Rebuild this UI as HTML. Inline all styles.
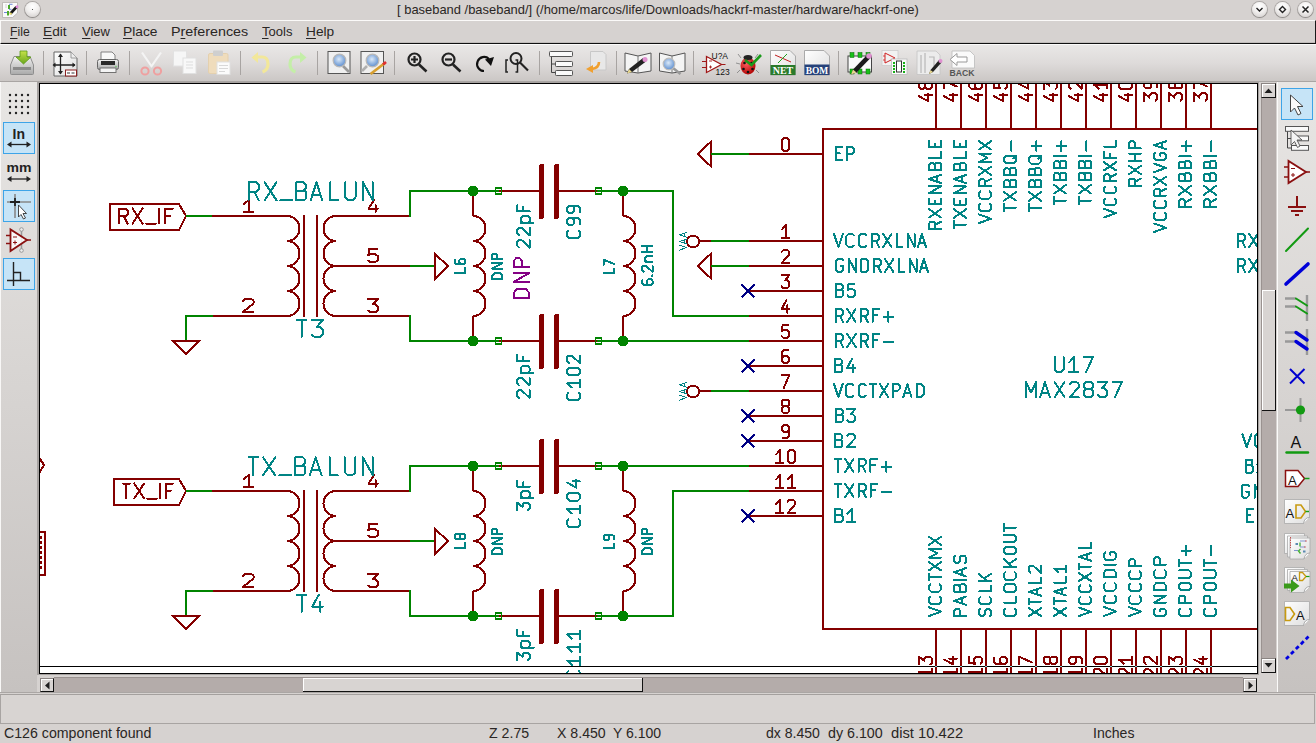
<!DOCTYPE html>
<html><head><meta charset="utf-8">
<style>
*{margin:0;padding:0;box-sizing:border-box}
html,body{width:1316px;height:743px;overflow:hidden;background:#d6d2d0;font-family:"Liberation Sans",sans-serif;}
.abs{position:absolute}
#title{left:0;top:0;width:1316px;height:20px;background:#d6d2d0}
.ct{position:absolute;white-space:pre;transform-origin:0 0;color:#2a2624}
.tx{position:absolute;left:397px;top:2px;font-size:12.6px;color:#2a2624;white-space:nowrap;letter-spacing:0.02px}
.wbtn{position:absolute;top:2px;width:15px;height:15px;border-radius:50%;background:radial-gradient(circle at 50% 30%,#ffffff 0%,#f2f0ef 45%,#cdc9c7 100%);box-shadow:0 0 0 1px rgba(120,116,114,0.45),0 1px 1px rgba(0,0,0,0.25)}
#menu{left:0;top:20px;width:1316px;height:24px;background:#d6d2d0;border-top:1px solid #fbfaf9;border-left:1px solid #fbfaf9;border-right:1px solid #1a1a1a;border-bottom:1px solid #101010;box-shadow:inset 0 -1px 0 #c0bcba}
#menu span{position:absolute;top:5px;font-size:12.7px;color:#231f1e;white-space:nowrap}
#menu span u{text-decoration:none;border-bottom:1px solid #231f1e;line-height:11px;display:inline-block}
#tool{left:0;top:44px;width:1316px;height:38px;background:linear-gradient(#e9e7e6,#dedbda 50%,#cbc7c5);border-top:1px solid #fbfaf9;border-bottom:1px solid #a9a5a3}
.sep{position:absolute;top:7px;width:1px;height:24px;background:#a9a5a3;box-shadow:1px 0 0 #f2f0ef}
#lpanel{left:0;top:82px;width:37px;height:610px;background:linear-gradient(#e8e6e4,#c6c2c0);border-left:1px solid #f8f7f6}
#rpanel{left:1277px;top:82px;width:39px;height:610px;background:linear-gradient(#e8e6e4,#c6c2c0);border-left:1px solid #fbfaf9}
.selb{position:absolute;width:32px;height:32px;background:#c6e4f7;border:1px solid #3da4e8}
#canvasframe{left:37px;top:82px;width:1222px;height:593px;background:#a6a2a0}
#canvas{left:39px;top:83px;width:1219px;height:591px;background:#000}
#canvasin{left:40px;top:84px;width:1217px;height:589px;background:#fff;overflow:hidden}
#vscroll{left:1259px;top:82px;width:18px;height:593px;background:#d6d2d0}
#vtrack{left:1261px;top:98px;width:15px;height:561px;background:#b4acaa;border-left:1px solid #9a9290}
#vthumb{left:1262px;top:290px;width:14px;height:121px;background:#d8d4d2;border-right:1px solid #111;border-bottom:1px solid #111;box-shadow:inset 1px 1px 0 #fff}
.sbtn{position:absolute;width:15px;height:15px;background:#d8d4d2;border:1px solid #111;border-top-color:#8a8482;border-left-color:#8a8482;box-shadow:inset 1px 1px 0 #fff}
#hscroll{left:37px;top:675px;width:1222px;height:18px;background:#d6d2d0}
#htrack{left:54px;top:677px;width:1189px;height:15px;background:#b4acaa;border-top:1px solid #9a9290}
#hthumb{left:303px;top:678px;width:340px;height:14px;background:#d8d4d2;border-right:1px solid #111;border-bottom:1px solid #111;box-shadow:inset 1px 1px 0 #fff}
#status{left:0;top:693px;width:1316px;height:50px;background:#d6d2d0}
#statbox{left:0;top:694px;width:1315px;height:30px;border:1px solid #a8a4a2;border-top-color:#a4a09e;background:#d8d4d2}
#status span{position:absolute;top:32px;font-size:13px;color:#2a2624;white-space:nowrap}
</style></head>
<body>
<div id="title" class="abs">
  <svg class="abs" style="left:0;top:0" width="20" height="20" viewBox="0 0 20 20">
    <path d="M2.5,2.5 H17.5 V13 L12.5,17.5 H2.5 Z" fill="#fafafa" stroke="#b4b0ac" stroke-width="0.8"/>
    <path d="M5.5,5 h1 M5.5,7 h1" stroke="#999" stroke-width="0.8"/>
    <rect x="8" y="5" width="2" height="4" fill="#4caa2a"/>
    <rect x="7" y="11" width="2" height="4.5" fill="#4caa2a"/>
    <path d="M9,4.3 h3.5 M9,9.3 h2.5 M4,12.5 h3" stroke="#4a6ad0" stroke-width="0.8"/>
    <path d="M10.5,13.5 L16.5,7" stroke="#151515" stroke-width="2.6"/>
    <circle cx="10.6" cy="13.6" r="1.2" fill="#e8dc70"/>
    <circle cx="17" cy="6.8" r="1.5" fill="#e088d8"/>
  </svg>
  <div class="wbtn" style="left:25px"><div style="position:absolute;left:7px;top:7px;width:1px;height:1px;background:#555"></div></div>
  <div class="wbtn" style="left:1252px"><svg width="15" height="15"><path d="M4.5 6 L7.5 9 L10.5 6" stroke="#222" stroke-width="1.4" fill="none"/></svg></div>
  <div class="wbtn" style="left:1275px"><svg width="15" height="15"><path d="M7.5 4.5 L10.5 7.5 L7.5 10.5 L4.5 7.5 Z" stroke="#222" stroke-width="1.4" fill="none"/></svg></div>
  <div class="wbtn" style="left:1298px"><svg width="15" height="15"><path d="M4.5 4.5 L10.5 10.5 M10.5 4.5 L4.5 10.5" stroke="#222" stroke-width="1.5" fill="none"/></svg></div>
</div>
<div id="menu" class="abs"></div>
<div id="tool" class="abs">

</div>
<div id="lpanel" class="abs">

</div>
<div id="canvasframe" class="abs"></div>
<div id="canvas" class="abs"></div>
<div id="canvasin" class="abs">
<svg width="1217" height="589" viewBox="40 84 1217 589" shape-rendering="crispEdges" style="position:absolute;left:0;top:0">
<polygon points="110,204 179,204 186,216 179,230 110,230" stroke="#840000" stroke-width="2" fill="none" stroke-linecap="square"/>
<path d="M119,223.5 L119,208.5 L125.39,208.5 L127.57,210.6 L127.57,214.2 L125.39,216.3 L119,216.3M123.83,216.3 L127.57,223.5M132.56,208.5 L142.62,223.5M142.62,208.5 L132.56,223.5M145.89,223.5 L155.93,223.5M159.31,208.5 L159.31,223.5M172.6,208.5 L165.11,208.5 L165.11,223.5M165.11,215.7 L170.42,215.7" stroke="#840000" stroke-width="2" fill="none" stroke-linecap="round" stroke-linejoin="round"/>
<line x1="186" y1="216" x2="212" y2="216" stroke="#008400" stroke-width="2" stroke-linecap="butt"/>
<line x1="212" y1="216" x2="287" y2="216" stroke="#840000" stroke-width="2" stroke-linecap="butt"/>
<path d="M287,216 A12.5,12.5 0 0 1 287,241 A12.5,12.5 0 0 1 287,266 A12.5,12.5 0 0 1 287,291 A12.5,12.5 0 0 1 287,316" stroke="#840000" stroke-width="2" fill="none"/>
<line x1="212" y1="316" x2="287" y2="316" stroke="#840000" stroke-width="2" stroke-linecap="butt"/>
<polyline points="212,316 186,316 186,341" stroke="#008400" stroke-width="2" fill="none" stroke-linecap="square"/>
<polygon points="173,341 199,341 186,354" stroke="#840000" stroke-width="2" fill="none" stroke-linecap="square"/>
<line x1="304" y1="215" x2="304" y2="317" stroke="#840000" stroke-width="2" stroke-linecap="butt"/>
<line x1="317" y1="215" x2="317" y2="317" stroke="#840000" stroke-width="2" stroke-linecap="butt"/>
<path d="M336,216 A12.5,12.5 0 0 0 336,241 A12.5,12.5 0 0 0 336,266 A12.5,12.5 0 0 0 336,291 A12.5,12.5 0 0 0 336,316" stroke="#840000" stroke-width="2" fill="none"/>
<line x1="336" y1="216" x2="410" y2="216" stroke="#840000" stroke-width="2" stroke-linecap="butt"/>
<line x1="336" y1="266" x2="410" y2="266" stroke="#840000" stroke-width="2" stroke-linecap="butt"/>
<line x1="336" y1="316" x2="410" y2="316" stroke="#840000" stroke-width="2" stroke-linecap="butt"/>
<polyline points="410,216 410,191 473,191" stroke="#008400" stroke-width="2" fill="none" stroke-linecap="square"/>
<polyline points="410,316 410,341 473,341" stroke="#008400" stroke-width="2" fill="none" stroke-linecap="square"/>
<line x1="410" y1="266" x2="435" y2="266" stroke="#008400" stroke-width="2" stroke-linecap="butt"/>
<polygon points="435,254 435,279 448,266" stroke="#840000" stroke-width="2" fill="none" stroke-linecap="square"/>
<path d="M243.5,204.27 L248.84,200 L248.84,212.2M243.5,212.2 L252.8,212.2" stroke="#840000" stroke-width="2" fill="none" stroke-linecap="round" stroke-linejoin="round"/>
<path d="M374.27,200 L368.5,208.54 L377.8,208.54M375.56,205.12 L375.56,212.2" stroke="#840000" stroke-width="2" fill="none" stroke-linecap="round" stroke-linejoin="round"/>
<path d="M377.29,249 L369.07,249 L368.36,254.98 L370.14,254.46 L375.5,254.46 L378,256.28 L378,260.18 L375.5,262 L370.14,262 L368,260.44" stroke="#840000" stroke-width="2" fill="none" stroke-linecap="round" stroke-linejoin="round"/>
<path d="M243,300.69 L245.39,299 L251.11,299 L253.5,300.69 L253.5,303.42 L243,312 L253.5,312" stroke="#840000" stroke-width="2" fill="none" stroke-linecap="round" stroke-linejoin="round"/>
<path d="M368,299 L378,299 L372.56,304.46 L375.37,304.46 L378,306.41 L378,310.18 L375.54,312 L370.1,312 L368,310.44" stroke="#840000" stroke-width="2" fill="none" stroke-linecap="round" stroke-linejoin="round"/>
<path d="M248.5,200.3 L248.5,182.3 L256.07,182.3 L258.66,184.82 L258.66,189.14 L256.07,191.66 L248.5,191.66M254.23,191.66 L258.66,200.3M264.57,182.3 L276.5,200.3M276.5,182.3 L264.57,200.3M280.37,200.3 L292.28,200.3M296.41,190.58 L304.22,190.58 L306.27,192.56 L306.27,198.14 L304.22,200.3 L296.41,200.3 L296.41,182.3 L303.66,182.3 L305.52,184.1 L305.52,188.78 L303.66,190.58M310.68,200.3 L316.48,182.3 L322.31,200.3M312.59,194.9 L320.39,194.9M330.19,182.3 L330.19,200.3 L338.14,200.3M345.26,182.3 L345.26,197.42 L348.24,200.3 L352.52,200.3 L355.5,197.42 L355.5,182.3M363.03,200.3 L363.03,182.3 L372.8,200.3 L372.8,182.3" stroke="#008484" stroke-width="2" fill="none" stroke-linecap="round" stroke-linejoin="round"/>
<path d="M297,320 L306.45,320M301.72,320 L301.72,336.7M311.83,320 L322.8,320 L316.83,327.01 L319.92,327.01 L322.8,329.52 L322.8,334.36 L320.1,336.7 L314.13,336.7 L311.83,334.7" stroke="#008484" stroke-width="2" fill="none" stroke-linecap="round" stroke-linejoin="round"/>
<line x1="473" y1="191" x2="473" y2="216" stroke="#840000" stroke-width="2" stroke-linecap="butt"/>
<path d="M473,216 A12.5,12.5 0 0 1 473,241 A12.5,12.5 0 0 1 473,266 A12.5,12.5 0 0 1 473,291 A12.5,12.5 0 0 1 473,316" stroke="#840000" stroke-width="2" fill="none"/>
<line x1="473" y1="316" x2="473" y2="341" stroke="#840000" stroke-width="2" stroke-linecap="butt"/>
<line x1="623" y1="191" x2="623" y2="216" stroke="#840000" stroke-width="2" stroke-linecap="butt"/>
<path d="M623,216 A12.5,12.5 0 0 1 623,241 A12.5,12.5 0 0 1 623,266 A12.5,12.5 0 0 1 623,291 A12.5,12.5 0 0 1 623,316" stroke="#840000" stroke-width="2" fill="none"/>
<line x1="623" y1="316" x2="623" y2="341" stroke="#840000" stroke-width="2" stroke-linecap="butt"/>
<line x1="473" y1="191" x2="499" y2="191" stroke="#008400" stroke-width="2" stroke-linecap="butt"/>
<line x1="499" y1="191" x2="539" y2="191" stroke="#840000" stroke-width="2" stroke-linecap="butt"/>
<line x1="559" y1="191" x2="597" y2="191" stroke="#840000" stroke-width="2" stroke-linecap="butt"/>
<line x1="597" y1="191" x2="623" y2="191" stroke="#008400" stroke-width="2" stroke-linecap="butt"/>
<rect x="539" y="164" width="5" height="55" rx="2" fill="#840000"/>
<rect x="554" y="164" width="5" height="55" rx="2" fill="#840000"/>
<rect x="495.5" y="188" width="6" height="6" fill="none" stroke="#008400" stroke-width="1.2"/>
<rect x="595.5" y="188" width="6" height="6" fill="none" stroke="#008400" stroke-width="1.2"/>
<line x1="473" y1="341" x2="499" y2="341" stroke="#008400" stroke-width="2" stroke-linecap="butt"/>
<line x1="499" y1="341" x2="539" y2="341" stroke="#840000" stroke-width="2" stroke-linecap="butt"/>
<line x1="559" y1="341" x2="597" y2="341" stroke="#840000" stroke-width="2" stroke-linecap="butt"/>
<line x1="597" y1="341" x2="623" y2="341" stroke="#008400" stroke-width="2" stroke-linecap="butt"/>
<rect x="539" y="314" width="5" height="55" rx="2" fill="#840000"/>
<rect x="554" y="314" width="5" height="55" rx="2" fill="#840000"/>
<rect x="495.5" y="338" width="6" height="6" fill="none" stroke="#008400" stroke-width="1.2"/>
<rect x="595.5" y="338" width="6" height="6" fill="none" stroke="#008400" stroke-width="1.2"/>
<circle cx="473" cy="191" r="5.5" fill="#008400"/>
<circle cx="473" cy="341" r="5.5" fill="#008400"/>
<circle cx="623" cy="191" r="5.5" fill="#008400"/>
<circle cx="623" cy="341" r="5.5" fill="#008400"/>
<path d="M454.8,272.8 L465,272.8 L465,268.34M454.8,259.54 L454.8,262.68 L456.43,264.35 L463.47,264.35 L465,262.78 L465,260.07 L463.47,258.5 L460.92,258.5 L459.39,260.07 L459.39,262.78 L460.92,264.35" stroke="#008484" stroke-width="2" fill="none" stroke-linecap="round" stroke-linejoin="round"/>
<path d="M492.3,279 L502.1,279 L502.1,275.49 L499.94,273.16 L494.46,273.16 L492.3,275.49 L492.3,279M502.1,268.7 L492.3,268.7 L502.1,263.08 L492.3,263.08M502.1,259.26 L492.3,259.26 L492.3,254.99 L493.67,253.5 L496.02,253.5 L497.4,254.99 L497.4,259.26" stroke="#008484" stroke-width="2" fill="none" stroke-linecap="round" stroke-linejoin="round"/>
<path d="M603.5,272.8 L614,272.8 L614,268.86M603.5,265.33 L603.5,259.8 L614,263.86" stroke="#008484" stroke-width="2" fill="none" stroke-linecap="round" stroke-linejoin="round"/>
<path d="M642.3,280.2 L642.3,283.46 L643.93,285.2 L650.97,285.2 L652.5,283.57 L652.5,280.75 L650.97,279.12 L648.42,279.12 L646.89,280.75 L646.89,283.57 L648.42,285.2M652.09,275.81 L652.5,275.16M643.63,271.84 L642.3,270.43 L642.3,267.07 L643.63,265.65 L645.77,265.65 L652.5,271.84 L652.5,265.65M645.36,261.64 L652.5,261.64M646.58,261.64 L645.36,260.33 L645.36,257.29 L646.58,255.99 L652.5,255.99M642.3,251.97 L652.5,251.97M642.3,246 L652.5,246M647.2,251.97 L647.2,246" stroke="#008484" stroke-width="2" fill="none" stroke-linecap="round" stroke-linejoin="round"/>
<path d="M518.99,247.5 L517.4,245.8 L517.4,241.74 L518.99,240.04 L521.55,240.04 L529.6,247.5 L529.6,240.04M518.99,235.2 L517.4,233.49 L517.4,229.44 L518.99,227.74 L521.55,227.74 L529.6,235.2 L529.6,227.74M521.06,222.89 L533.63,222.89M522.52,222.89 L521.06,221.32 L521.06,217.66 L522.52,216.09 L528.14,216.09 L529.6,217.66 L529.6,221.32 L528.14,222.89M517.4,205 L517.4,211.24 L529.6,211.24M523.26,211.24 L523.26,206.82" stroke="#008484" stroke-width="2" fill="none" stroke-linecap="round" stroke-linejoin="round"/>
<path d="M514.1,297.9 L528.9,297.9 L528.9,292.44 L525.64,288.8 L517.36,288.8 L514.1,292.44 L514.1,297.9M528.9,281.86 L514.1,281.86 L528.9,273.11 L514.1,273.11M528.9,267.16 L514.1,267.16 L514.1,260.52 L516.17,258.2 L519.72,258.2 L521.8,260.52 L521.8,267.16" stroke="#840084" stroke-width="2" fill="none" stroke-linecap="round" stroke-linejoin="round"/>
<path d="M568.48,230.7 L567.2,232.03 L567.2,235.87 L569.25,238 L577.95,238 L580,235.87 L580,232.03 L578.72,230.7M580,223.94 L580,220.01 L577.95,217.91 L569.12,217.91 L567.2,219.87 L567.2,223.29 L569.12,225.26 L572.32,225.26 L574.24,223.29 L574.24,219.87 L572.32,217.91M580,211.74 L580,207.8 L577.95,205.7 L569.12,205.7 L567.2,207.67 L567.2,211.08 L569.12,213.05 L572.32,213.05 L574.24,211.08 L574.24,207.67 L572.32,205.7" stroke="#008484" stroke-width="2" fill="none" stroke-linecap="round" stroke-linejoin="round"/>
<path d="M518.89,397.8 L517.3,396.08 L517.3,391.97 L518.89,390.25 L521.45,390.25 L529.5,397.8 L529.5,390.25M518.89,385.35 L517.3,383.63 L517.3,379.52 L518.89,377.8 L521.45,377.8 L529.5,385.35 L529.5,377.8M520.96,372.9 L533.53,372.9M522.42,372.9 L520.96,371.31 L520.96,367.61 L522.42,366.02 L528.04,366.02 L529.5,367.61 L529.5,371.31 L528.04,372.9M517.3,354.8 L517.3,361.12 L529.5,361.12M523.16,361.12 L523.16,356.64" stroke="#008484" stroke-width="2" fill="none" stroke-linecap="round" stroke-linejoin="round"/>
<path d="M568.48,392.89 L567.2,394.24 L567.2,398.14 L569.25,400.3 L577.95,400.3 L580,398.14 L580,394.24 L578.72,392.89M571.68,387.36 L567.2,383.23 L580,383.23M580,387.36 L580,380.16M567.2,373.23 L567.2,370.03 L569.12,368.03 L578.08,368.03 L580,370.03 L580,373.23 L578.08,375.23 L569.12,375.23 L567.2,373.23M568.86,363.1 L567.2,361.36 L567.2,357.23 L568.86,355.5 L571.55,355.5 L580,363.1 L580,355.5" stroke="#008484" stroke-width="2" fill="none" stroke-linecap="round" stroke-linejoin="round"/>
<polyline points="623,191 673,191 673,316 749,316" stroke="#008400" stroke-width="2" fill="none" stroke-linecap="square"/>
<polyline points="623,341 749,341" stroke="#008400" stroke-width="2" fill="none" stroke-linecap="square"/>
<polygon points="114,479 179,479 186,491 179,505 114,505" stroke="#840000" stroke-width="2" fill="none" stroke-linecap="square"/>
<path d="M122.5,483.5 L130.21,483.5M126.36,483.5 L126.36,498.5M134.27,483.5 L144,498.5M144,483.5 L134.27,498.5M147.16,498.5 L156.88,498.5M160.14,483.5 L160.14,498.5M173,483.5 L165.76,483.5 L165.76,498.5M165.76,490.7 L170.89,490.7" stroke="#840000" stroke-width="2" fill="none" stroke-linecap="round" stroke-linejoin="round"/>
<line x1="186" y1="491" x2="212" y2="491" stroke="#008400" stroke-width="2" stroke-linecap="butt"/>
<line x1="212" y1="491" x2="287" y2="491" stroke="#840000" stroke-width="2" stroke-linecap="butt"/>
<path d="M287,491 A12.5,12.5 0 0 1 287,516 A12.5,12.5 0 0 1 287,541 A12.5,12.5 0 0 1 287,566 A12.5,12.5 0 0 1 287,591" stroke="#840000" stroke-width="2" fill="none"/>
<line x1="212" y1="591" x2="287" y2="591" stroke="#840000" stroke-width="2" stroke-linecap="butt"/>
<polyline points="212,591 186,591 186,616" stroke="#008400" stroke-width="2" fill="none" stroke-linecap="square"/>
<polygon points="173,616 199,616 186,629" stroke="#840000" stroke-width="2" fill="none" stroke-linecap="square"/>
<line x1="304" y1="490" x2="304" y2="592" stroke="#840000" stroke-width="2" stroke-linecap="butt"/>
<line x1="317" y1="490" x2="317" y2="592" stroke="#840000" stroke-width="2" stroke-linecap="butt"/>
<path d="M336,491 A12.5,12.5 0 0 0 336,516 A12.5,12.5 0 0 0 336,541 A12.5,12.5 0 0 0 336,566 A12.5,12.5 0 0 0 336,591" stroke="#840000" stroke-width="2" fill="none"/>
<line x1="336" y1="491" x2="410" y2="491" stroke="#840000" stroke-width="2" stroke-linecap="butt"/>
<line x1="336" y1="541" x2="410" y2="541" stroke="#840000" stroke-width="2" stroke-linecap="butt"/>
<line x1="336" y1="591" x2="410" y2="591" stroke="#840000" stroke-width="2" stroke-linecap="butt"/>
<polyline points="410,491 410,466 473,466" stroke="#008400" stroke-width="2" fill="none" stroke-linecap="square"/>
<polyline points="410,591 410,616 473,616" stroke="#008400" stroke-width="2" fill="none" stroke-linecap="square"/>
<line x1="410" y1="541" x2="435" y2="541" stroke="#008400" stroke-width="2" stroke-linecap="butt"/>
<polygon points="435,529 435,554 448,541" stroke="#840000" stroke-width="2" fill="none" stroke-linecap="square"/>
<path d="M243.5,479.27 L248.84,475 L248.84,487.2M243.5,487.2 L252.8,487.2" stroke="#840000" stroke-width="2" fill="none" stroke-linecap="round" stroke-linejoin="round"/>
<path d="M374.27,475 L368.5,483.54 L377.8,483.54M375.56,480.12 L375.56,487.2" stroke="#840000" stroke-width="2" fill="none" stroke-linecap="round" stroke-linejoin="round"/>
<path d="M377.29,524 L369.07,524 L368.36,529.98 L370.14,529.46 L375.5,529.46 L378,531.28 L378,535.18 L375.5,537 L370.14,537 L368,535.44" stroke="#840000" stroke-width="2" fill="none" stroke-linecap="round" stroke-linejoin="round"/>
<path d="M243,575.69 L245.39,574 L251.11,574 L253.5,575.69 L253.5,578.42 L243,587 L253.5,587" stroke="#840000" stroke-width="2" fill="none" stroke-linecap="round" stroke-linejoin="round"/>
<path d="M368,574 L378,574 L372.56,579.46 L375.37,579.46 L378,581.41 L378,585.18 L375.54,587 L370.1,587 L368,585.44" stroke="#840000" stroke-width="2" fill="none" stroke-linecap="round" stroke-linejoin="round"/>
<path d="M248.5,457.3 L258.08,457.3M253.29,457.3 L253.29,475.3M263.11,457.3 L275.2,475.3M275.2,457.3 L263.11,475.3M279.12,475.3 L291.19,475.3M295.38,465.58 L303.3,465.58 L305.37,467.56 L305.37,473.14 L303.3,475.3 L295.38,475.3 L295.38,457.3 L302.73,457.3 L304.62,459.1 L304.62,463.78 L302.73,465.58M309.84,475.3 L315.72,457.3 L321.62,475.3M311.78,469.9 L319.68,469.9M329.62,457.3 L329.62,475.3 L337.67,475.3M344.89,457.3 L344.89,472.42 L347.91,475.3 L352.25,475.3 L355.26,472.42 L355.26,457.3M362.9,475.3 L362.9,457.3 L372.8,475.3 L372.8,457.3" stroke="#008484" stroke-width="2" fill="none" stroke-linecap="round" stroke-linejoin="round"/>
<path d="M297,595 L306.32,595M301.66,595 L301.66,611.7M318.77,595 L312.16,606.69 L322.8,606.69M320.23,602.01 L320.23,611.7" stroke="#008484" stroke-width="2" fill="none" stroke-linecap="round" stroke-linejoin="round"/>
<line x1="473" y1="466" x2="473" y2="491" stroke="#840000" stroke-width="2" stroke-linecap="butt"/>
<path d="M473,491 A12.5,12.5 0 0 1 473,516 A12.5,12.5 0 0 1 473,541 A12.5,12.5 0 0 1 473,566 A12.5,12.5 0 0 1 473,591" stroke="#840000" stroke-width="2" fill="none"/>
<line x1="473" y1="591" x2="473" y2="616" stroke="#840000" stroke-width="2" stroke-linecap="butt"/>
<line x1="623" y1="466" x2="623" y2="491" stroke="#840000" stroke-width="2" stroke-linecap="butt"/>
<path d="M623,491 A12.5,12.5 0 0 1 623,516 A12.5,12.5 0 0 1 623,541 A12.5,12.5 0 0 1 623,566 A12.5,12.5 0 0 1 623,591" stroke="#840000" stroke-width="2" fill="none"/>
<line x1="623" y1="591" x2="623" y2="616" stroke="#840000" stroke-width="2" stroke-linecap="butt"/>
<line x1="473" y1="466" x2="499" y2="466" stroke="#008400" stroke-width="2" stroke-linecap="butt"/>
<line x1="499" y1="466" x2="539" y2="466" stroke="#840000" stroke-width="2" stroke-linecap="butt"/>
<line x1="559" y1="466" x2="597" y2="466" stroke="#840000" stroke-width="2" stroke-linecap="butt"/>
<line x1="597" y1="466" x2="623" y2="466" stroke="#008400" stroke-width="2" stroke-linecap="butt"/>
<rect x="539" y="439" width="5" height="55" rx="2" fill="#840000"/>
<rect x="554" y="439" width="5" height="55" rx="2" fill="#840000"/>
<rect x="495.5" y="463" width="6" height="6" fill="none" stroke="#008400" stroke-width="1.2"/>
<rect x="595.5" y="463" width="6" height="6" fill="none" stroke="#008400" stroke-width="1.2"/>
<line x1="473" y1="616" x2="499" y2="616" stroke="#008400" stroke-width="2" stroke-linecap="butt"/>
<line x1="499" y1="616" x2="539" y2="616" stroke="#840000" stroke-width="2" stroke-linecap="butt"/>
<line x1="559" y1="616" x2="597" y2="616" stroke="#840000" stroke-width="2" stroke-linecap="butt"/>
<line x1="597" y1="616" x2="623" y2="616" stroke="#008400" stroke-width="2" stroke-linecap="butt"/>
<rect x="539" y="589" width="5" height="55" rx="2" fill="#840000"/>
<rect x="554" y="589" width="5" height="55" rx="2" fill="#840000"/>
<rect x="495.5" y="613" width="6" height="6" fill="none" stroke="#008400" stroke-width="1.2"/>
<rect x="595.5" y="613" width="6" height="6" fill="none" stroke="#008400" stroke-width="1.2"/>
<circle cx="473" cy="466" r="5.5" fill="#008400"/>
<circle cx="473" cy="616" r="5.5" fill="#008400"/>
<circle cx="623" cy="466" r="5.5" fill="#008400"/>
<circle cx="623" cy="616" r="5.5" fill="#008400"/>
<path d="M454.8,547.8 L465,547.8 L465,543.34M459.7,538.09 L458.47,539.35 L456.02,539.35 L454.8,538.09 L454.8,534.75 L456.02,533.5 L458.47,533.5 L459.7,534.75 L459.7,538.09 L460.92,539.35 L463.78,539.35 L465,538.09 L465,534.75 L463.78,533.5 L460.92,533.5 L459.7,534.75" stroke="#008484" stroke-width="2" fill="none" stroke-linecap="round" stroke-linejoin="round"/>
<path d="M492.3,554 L502.1,554 L502.1,550.49 L499.94,548.16 L494.46,548.16 L492.3,550.49 L492.3,554M502.1,543.7 L492.3,543.7 L502.1,538.08 L492.3,538.08M502.1,534.26 L492.3,534.26 L492.3,529.99 L493.67,528.5 L496.02,528.5 L497.4,529.99 L497.4,534.26" stroke="#008484" stroke-width="2" fill="none" stroke-linecap="round" stroke-linejoin="round"/>
<path d="M603.5,547.8 L614,547.8 L614,543.75M614,539.16 L614,536.32 L612.32,534.8 L605.08,534.8 L603.5,536.22 L603.5,538.69 L605.08,540.11 L607.7,540.11 L609.27,538.69 L609.27,536.22 L607.7,534.8" stroke="#008484" stroke-width="2" fill="none" stroke-linecap="round" stroke-linejoin="round"/>
<path d="M642.3,554 L652.1,554 L652.1,550.49 L649.94,548.16 L644.46,548.16 L642.3,550.49 L642.3,554M652.1,543.7 L642.3,543.7 L652.1,538.08 L642.3,538.08M652.1,534.26 L642.3,534.26 L642.3,529.99 L643.67,528.5 L646.02,528.5 L647.4,529.99 L647.4,534.26" stroke="#008484" stroke-width="2" fill="none" stroke-linecap="round" stroke-linejoin="round"/>
<path d="M517.4,510.3 L517.4,502.77 L522.52,506.87 L522.52,504.75 L524.35,502.77 L527.89,502.77 L529.6,504.62 L529.6,508.72 L528.14,510.3M521.06,497.95 L533.63,497.95M522.52,497.95 L521.06,496.42 L521.06,492.85 L522.52,491.31 L528.14,491.31 L529.6,492.85 L529.6,496.42 L528.14,497.95M517.4,480.5 L517.4,486.59 L529.6,486.59M523.26,486.59 L523.26,482.27" stroke="#008484" stroke-width="2" fill="none" stroke-linecap="round" stroke-linejoin="round"/>
<path d="M568.48,519.17 L567.2,520.59 L567.2,524.72 L569.25,527 L577.95,527 L580,524.72 L580,520.59 L578.72,519.17M571.68,513.32 L567.2,508.95 L580,508.95M580,513.32 L580,505.71M567.2,498.38 L567.2,495 L569.12,492.89 L578.08,492.89 L580,495 L580,498.38 L578.08,500.5 L569.12,500.5 L567.2,498.38M567.2,482.6 L576.16,487.67 L576.16,479.5M572.58,481.47 L580,481.47" stroke="#008484" stroke-width="2" fill="none" stroke-linecap="round" stroke-linejoin="round"/>
<path d="M517.4,660.3 L517.4,652.59 L522.52,656.78 L522.52,654.62 L524.35,652.59 L527.89,652.59 L529.6,654.48 L529.6,658.68 L528.14,660.3M521.06,647.66 L533.63,647.66M522.52,647.66 L521.06,646.1 L521.06,642.44 L522.52,640.87 L528.14,640.87 L529.6,642.44 L529.6,646.1 L528.14,647.66M517.4,629.8 L517.4,636.03 L529.6,636.03M523.26,636.03 L523.26,631.62" stroke="#008484" stroke-width="2" fill="none" stroke-linecap="round" stroke-linejoin="round"/>
<path d="M568.48,670.99 L567.2,672.44 L567.2,676.67 L569.25,679 L577.95,679 L580,676.67 L580,672.44 L578.72,670.99M571.68,665.01 L567.2,660.54 L580,660.54M580,665.01 L580,657.23M571.68,651.89 L567.2,647.43 L580,647.43M580,651.89 L580,644.11M571.68,638.78 L567.2,634.31 L580,634.31M580,638.78 L580,631" stroke="#008484" stroke-width="2" fill="none" stroke-linecap="round" stroke-linejoin="round"/>
<polyline points="623,466 749,466" stroke="#008400" stroke-width="2" fill="none" stroke-linecap="square"/>
<polyline points="623,616 673,616 673,491 749,491" stroke="#008400" stroke-width="2" fill="none" stroke-linecap="square"/>
<polyline points="30,457.5 39,457.5 44,465 39,473.5 30,473.5" stroke="#840000" stroke-width="2" fill="none" stroke-linecap="square"/>
<polyline points="30,532 45,532 45,575 30,575" stroke="#840000" stroke-width="2" fill="none" stroke-linecap="square"/>
<line x1="41" y1="536" x2="41" y2="539" stroke="#840000" stroke-width="2" stroke-linecap="butt"/>
<line x1="41" y1="541" x2="41" y2="544" stroke="#840000" stroke-width="2" stroke-linecap="butt"/>
<line x1="41" y1="546" x2="41" y2="549" stroke="#840000" stroke-width="2" stroke-linecap="butt"/>
<line x1="41" y1="551" x2="41" y2="554" stroke="#840000" stroke-width="2" stroke-linecap="butt"/>
<line x1="41" y1="556" x2="41" y2="559" stroke="#840000" stroke-width="2" stroke-linecap="butt"/>
<line x1="41" y1="561" x2="41" y2="564" stroke="#840000" stroke-width="2" stroke-linecap="butt"/>
<line x1="41" y1="566" x2="41" y2="569" stroke="#840000" stroke-width="2" stroke-linecap="butt"/>
<line x1="823" y1="129" x2="1300" y2="129" stroke="#840000" stroke-width="2" stroke-linecap="butt"/>
<line x1="823" y1="128" x2="823" y2="630" stroke="#840000" stroke-width="2" stroke-linecap="butt"/>
<line x1="823" y1="629" x2="1300" y2="629" stroke="#840000" stroke-width="2" stroke-linecap="butt"/>
<line x1="749" y1="154" x2="823" y2="154" stroke="#840000" stroke-width="2" stroke-linecap="butt"/>
<path d="M783.94,138 L787.06,138 L789.01,139.95 L789.01,149.05 L787.06,151 L783.94,151 L781.99,149.05 L781.99,139.95 L783.94,138" stroke="#840000" stroke-width="2" fill="none" stroke-linecap="round" stroke-linejoin="round"/>
<path d="M842.03,147 L836,147 L836,160 L842.03,160M836,153.24 L839.67,153.24M846.95,160 L846.95,147 L852.18,147 L854,148.82 L854,151.94 L852.18,153.76 L846.95,153.76" stroke="#008484" stroke-width="2" fill="none" stroke-linecap="round" stroke-linejoin="round"/>
<polygon points="711,141.5 711,166.5 698,154" stroke="#840000" stroke-width="2" fill="none" stroke-linecap="square"/>
<line x1="711" y1="154" x2="749" y2="154" stroke="#008400" stroke-width="2" stroke-linecap="butt"/>
<line x1="749" y1="241" x2="823" y2="241" stroke="#840000" stroke-width="2" stroke-linecap="butt"/>
<path d="M781.99,229.55 L786.02,225 L786.02,238M781.99,238 L789.01,238" stroke="#840000" stroke-width="2" fill="none" stroke-linecap="round" stroke-linejoin="round"/>
<path d="M834,234 L838.43,247 L842.87,234M853.72,235.3 L852.41,234 L848.59,234 L846.48,236.08 L846.48,244.92 L848.59,247 L852.41,247 L853.72,245.7M866.23,235.3 L864.92,234 L861.1,234 L859,236.08 L859,244.92 L861.1,247 L864.92,247 L866.23,245.7M871.87,247 L871.87,234 L877.17,234 L878.98,235.82 L878.98,238.94 L877.17,240.76 L871.87,240.76M875.88,240.76 L878.98,247M883.12,234 L891.46,247M891.46,234 L883.12,247M896.8,234 L896.8,247 L902.36,247M907.8,247 L907.8,234 L914.64,247 L914.64,234M917.86,247 L921.93,234 L926,247M919.2,243.1 L924.66,243.1" stroke="#008484" stroke-width="2" fill="none" stroke-linecap="round" stroke-linejoin="round"/>
<circle cx="693" cy="241.5" r="6" fill="none" stroke="#840000" stroke-width="2"/>
<line x1="699" y1="241" x2="711" y2="241" stroke="#840000" stroke-width="2" stroke-linecap="butt"/>
<line x1="711" y1="241" x2="749" y2="241" stroke="#008400" stroke-width="2" stroke-linecap="butt"/>
<path d="M679.5,250.1 L686.3,247.6 L679.5,245.09M686.3,243.72 L679.5,241.43 L686.3,239.12M684.26,242.96 L684.26,239.88M686.3,237.1 L679.5,234.8 L686.3,232.5M684.26,236.34 L684.26,233.26" stroke="#008484" stroke-width="1" fill="none" stroke-linecap="round" stroke-linejoin="round"/>
<line x1="749" y1="266" x2="823" y2="266" stroke="#840000" stroke-width="2" stroke-linecap="butt"/>
<path d="M781.79,251.69 L783.49,250 L787.51,250 L789.2,251.69 L789.2,254.42 L781.79,263 L789.2,263" stroke="#840000" stroke-width="2" fill="none" stroke-linecap="round" stroke-linejoin="round"/>
<path d="M843.13,260.3 L841.84,259 L838.08,259 L836,261.08 L836,269.92 L838.08,272 L841.31,272 L843.13,270.18 L843.13,266.02 L840.41,266.02M849.06,272 L849.06,259 L855.91,272 L855.91,259M861.35,259 L861.35,272 L865.63,272 L868.48,269.14 L868.48,261.86 L865.63,259 L861.35,259M873.7,272 L873.7,259 L879.02,259 L880.83,260.82 L880.83,263.94 L879.02,265.76 L873.7,265.76M877.72,265.76 L880.83,272M884.98,259 L893.35,272M893.35,259 L884.98,272M898.71,259 L898.71,272 L904.29,272M909.74,272 L909.74,259 L916.6,272 L916.6,259M919.84,272 L923.91,259 L928,272M921.18,268.1 L926.65,268.1" stroke="#008484" stroke-width="2" fill="none" stroke-linecap="round" stroke-linejoin="round"/>
<polygon points="711,253.5 711,278.5 698,266" stroke="#840000" stroke-width="2" fill="none" stroke-linecap="square"/>
<line x1="711" y1="266" x2="749" y2="266" stroke="#008400" stroke-width="2" stroke-linecap="butt"/>
<line x1="749" y1="291" x2="823" y2="291" stroke="#840000" stroke-width="2" stroke-linecap="butt"/>
<path d="M781.66,275 L789.33,275 L785.16,280.46 L787.32,280.46 L789.33,282.41 L789.33,286.18 L787.45,288 L783.28,288 L781.66,286.44" stroke="#840000" stroke-width="2" fill="none" stroke-linecap="round" stroke-linejoin="round"/>
<path d="M836,289.98 L841.58,289.98 L843.04,291.41 L843.04,295.44 L841.58,297 L836,297 L836,284 L841.18,284 L842.51,285.3 L842.51,288.68 L841.18,289.98M854.47,284 L848.36,284 L847.83,289.98 L849.15,289.46 L853.14,289.46 L855,291.28 L855,295.18 L853.14,297 L849.15,297 L847.56,295.44" stroke="#008484" stroke-width="2" fill="none" stroke-linecap="round" stroke-linejoin="round"/>
<line x1="741.5" y1="284.5" x2="754.5" y2="297.5" stroke="#000084" stroke-width="2" stroke-linecap="butt"/>
<line x1="754.5" y1="284.5" x2="741.5" y2="297.5" stroke="#000084" stroke-width="2" stroke-linecap="butt"/>
<line x1="749" y1="316" x2="823" y2="316" stroke="#840000" stroke-width="2" stroke-linecap="butt"/>
<path d="M786.41,300 L781.73,309.1 L789.27,309.1M787.45,305.46 L787.45,313" stroke="#840000" stroke-width="2" fill="none" stroke-linecap="round" stroke-linejoin="round"/>
<path d="M836,322 L836,309 L841.31,309 L843.12,310.82 L843.12,313.94 L841.31,315.76 L836,315.76M840.02,315.76 L843.12,322M847.27,309 L855.63,322M855.63,309 L847.27,322M860.6,322 L860.6,309 L865.91,309 L867.72,310.82 L867.72,313.94 L865.91,315.76 L860.6,315.76M864.62,315.76 L867.72,322M878.77,309 L872.55,309 L872.55,322M872.55,315.24 L876.96,315.24M883.67,316.93 L893,316.93M888.34,311.99 L888.34,321.87" stroke="#008484" stroke-width="2" fill="none" stroke-linecap="round" stroke-linejoin="round"/>
<line x1="749" y1="341" x2="823" y2="341" stroke="#840000" stroke-width="2" stroke-linecap="butt"/>
<path d="M788.62,325 L782.64,325 L782.12,330.98 L783.42,330.46 L787.32,330.46 L789.14,332.28 L789.14,336.18 L787.32,338 L783.42,338 L781.86,336.44" stroke="#840000" stroke-width="2" fill="none" stroke-linecap="round" stroke-linejoin="round"/>
<path d="M836,347 L836,334 L841.33,334 L843.15,335.82 L843.15,338.94 L841.33,340.76 L836,340.76M840.03,340.76 L843.15,347M847.32,334 L855.71,347M855.71,334 L847.32,347M860.7,347 L860.7,334 L866.03,334 L867.85,335.82 L867.85,338.94 L866.03,340.76 L860.7,340.76M864.74,340.76 L867.85,347M878.95,334 L872.7,334 L872.7,347M872.7,340.24 L877.13,340.24M883.83,341.93 L893,341.93" stroke="#008484" stroke-width="2" fill="none" stroke-linecap="round" stroke-linejoin="round"/>
<line x1="749" y1="366" x2="823" y2="366" stroke="#840000" stroke-width="2" stroke-linecap="butt"/>
<path d="M787.84,350 L783.94,350 L781.86,352.08 L781.86,361.05 L783.81,363 L787.19,363 L789.14,361.05 L789.14,357.8 L787.19,355.85 L783.81,355.85 L781.86,357.8" stroke="#840000" stroke-width="2" fill="none" stroke-linecap="round" stroke-linejoin="round"/>
<path d="M835,364.98 L840.79,364.98 L842.31,366.41 L842.31,370.44 L840.79,372 L835,372 L835,359 L840.38,359 L841.76,360.3 L841.76,363.68 L840.38,364.98M851.97,359 L847,368.1 L855,368.1M853.07,364.46 L853.07,372" stroke="#008484" stroke-width="2" fill="none" stroke-linecap="round" stroke-linejoin="round"/>
<line x1="741.5" y1="359.5" x2="754.5" y2="372.5" stroke="#000084" stroke-width="2" stroke-linecap="butt"/>
<line x1="754.5" y1="359.5" x2="741.5" y2="372.5" stroke="#000084" stroke-width="2" stroke-linecap="butt"/>
<line x1="749" y1="391" x2="823" y2="391" stroke="#840000" stroke-width="2" stroke-linecap="butt"/>
<path d="M781.6,375 L789.4,375 L783.68,388" stroke="#840000" stroke-width="2" fill="none" stroke-linecap="round" stroke-linejoin="round"/>
<path d="M834,384 L838.35,397 L842.71,384M853.38,385.3 L852.09,384 L848.34,384 L846.27,386.08 L846.27,394.92 L848.34,397 L852.09,397 L853.38,395.7M865.68,385.3 L864.39,384 L860.64,384 L858.57,386.08 L858.57,394.92 L860.64,397 L864.39,397 L865.68,395.7M869.92,384 L876.42,384M873.17,384 L873.17,397M879.83,384 L888.03,397M888.03,384 L879.83,397M892.75,397 L892.75,384 L897.86,384 L899.64,385.82 L899.64,388.94 L897.86,390.76 L892.75,390.76M903.36,397 L907.35,384 L911.36,397M904.68,393.1 L910.04,393.1M917.01,384 L917.01,397 L921.21,397 L924,394.14 L924,386.86 L921.21,384 L917.01,384" stroke="#008484" stroke-width="2" fill="none" stroke-linecap="round" stroke-linejoin="round"/>
<circle cx="693" cy="391.5" r="6" fill="none" stroke="#840000" stroke-width="2"/>
<line x1="699" y1="391" x2="711" y2="391" stroke="#840000" stroke-width="2" stroke-linecap="butt"/>
<line x1="711" y1="391" x2="749" y2="391" stroke="#008400" stroke-width="2" stroke-linecap="butt"/>
<path d="M679.5,400.1 L686.3,397.6 L679.5,395.09M686.3,393.72 L679.5,391.43 L686.3,389.12M684.26,392.96 L684.26,389.88M686.3,387.1 L679.5,384.8 L686.3,382.5M684.26,386.34 L684.26,383.26" stroke="#008484" stroke-width="1" fill="none" stroke-linecap="round" stroke-linejoin="round"/>
<line x1="749" y1="416" x2="823" y2="416" stroke="#840000" stroke-width="2" stroke-linecap="butt"/>
<path d="M783.42,406.24 L781.86,404.68 L781.86,401.56 L783.42,400 L787.58,400 L789.14,401.56 L789.14,404.68 L787.58,406.24 L783.42,406.24 L781.86,407.8 L781.86,411.44 L783.42,413 L787.58,413 L789.14,411.44 L789.14,407.8 L787.58,406.24" stroke="#840000" stroke-width="2" fill="none" stroke-linecap="round" stroke-linejoin="round"/>
<path d="M836,414.98 L841.58,414.98 L843.04,416.41 L843.04,420.44 L841.58,422 L836,422 L836,409 L841.18,409 L842.51,410.3 L842.51,413.68 L841.18,414.98M847.16,409 L855,409 L850.73,414.46 L852.94,414.46 L855,416.41 L855,420.18 L853.07,422 L848.81,422 L847.16,420.44" stroke="#008484" stroke-width="2" fill="none" stroke-linecap="round" stroke-linejoin="round"/>
<line x1="741.5" y1="409.5" x2="754.5" y2="422.5" stroke="#000084" stroke-width="2" stroke-linecap="butt"/>
<line x1="754.5" y1="409.5" x2="741.5" y2="422.5" stroke="#000084" stroke-width="2" stroke-linecap="butt"/>
<line x1="749" y1="441" x2="823" y2="441" stroke="#840000" stroke-width="2" stroke-linecap="butt"/>
<path d="M783.16,438 L787.06,438 L789.14,435.92 L789.14,426.95 L787.19,425 L783.81,425 L781.86,426.95 L781.86,430.2 L783.81,432.15 L787.19,432.15 L789.14,430.2" stroke="#840000" stroke-width="2" fill="none" stroke-linecap="round" stroke-linejoin="round"/>
<path d="M835,439.98 L840.83,439.98 L842.36,441.41 L842.36,445.44 L840.83,447 L835,447 L835,434 L840.42,434 L841.81,435.3 L841.81,438.68 L840.42,439.98M847.08,435.69 L848.89,434 L853.19,434 L855,435.69 L855,438.42 L847.08,447 L855,447" stroke="#008484" stroke-width="2" fill="none" stroke-linecap="round" stroke-linejoin="round"/>
<line x1="741.5" y1="434.5" x2="754.5" y2="447.5" stroke="#000084" stroke-width="2" stroke-linecap="butt"/>
<line x1="754.5" y1="434.5" x2="741.5" y2="447.5" stroke="#000084" stroke-width="2" stroke-linecap="butt"/>
<line x1="749" y1="466" x2="823" y2="466" stroke="#840000" stroke-width="2" stroke-linecap="butt"/>
<path d="M776.08,454.55 L780.11,450 L780.11,463M776.08,463 L783.1,463M789.86,450 L792.98,450 L794.93,451.95 L794.93,461.05 L792.98,463 L789.86,463 L787.91,461.05 L787.91,451.95 L789.86,450" stroke="#840000" stroke-width="2" fill="none" stroke-linecap="round" stroke-linejoin="round"/>
<path d="M835,459 L841.65,459M838.32,459 L838.32,472M845.14,459 L853.52,472M853.52,459 L845.14,472M858.51,472 L858.51,459 L863.83,459 L865.65,460.82 L865.65,463.94 L863.83,465.76 L858.51,465.76M862.54,465.76 L865.65,472M876.73,459 L870.49,459 L870.49,472M870.49,465.24 L874.91,465.24M881.65,466.93 L891,466.93M886.33,461.99 L886.33,471.87" stroke="#008484" stroke-width="2" fill="none" stroke-linecap="round" stroke-linejoin="round"/>
<line x1="749" y1="491" x2="823" y2="491" stroke="#840000" stroke-width="2" stroke-linecap="butt"/>
<path d="M776.08,479.55 L780.11,475 L780.11,488M776.08,488 L783.1,488M787.91,479.55 L791.94,475 L791.94,488M787.91,488 L794.93,488" stroke="#840000" stroke-width="2" fill="none" stroke-linecap="round" stroke-linejoin="round"/>
<path d="M835,484 L841.67,484M838.34,484 L838.34,497M845.18,484 L853.6,497M853.6,484 L845.18,497M858.61,497 L858.61,484 L863.95,484 L865.78,485.82 L865.78,488.94 L863.95,490.76 L858.61,490.76M862.65,490.76 L865.78,497M876.9,484 L870.64,484 L870.64,497M870.64,490.24 L875.08,490.24M881.8,491.93 L891,491.93" stroke="#008484" stroke-width="2" fill="none" stroke-linecap="round" stroke-linejoin="round"/>
<line x1="749" y1="516" x2="823" y2="516" stroke="#840000" stroke-width="2" stroke-linecap="butt"/>
<path d="M775.88,504.55 L779.91,500 L779.91,513M775.88,513 L782.9,513M787.71,501.69 L789.4,500 L793.43,500 L795.12,501.69 L795.12,504.42 L787.71,513 L795.12,513" stroke="#840000" stroke-width="2" fill="none" stroke-linecap="round" stroke-linejoin="round"/>
<path d="M835,514.98 L840.96,514.98 L842.52,516.41 L842.52,520.44 L840.96,522 L835,522 L835,509 L840.53,509 L841.95,510.3 L841.95,513.68 L840.53,514.98M847.34,513.55 L851.74,509 L851.74,522M847.34,522 L855,522" stroke="#008484" stroke-width="2" fill="none" stroke-linecap="round" stroke-linejoin="round"/>
<line x1="741.5" y1="509.5" x2="754.5" y2="522.5" stroke="#000084" stroke-width="2" stroke-linecap="butt"/>
<line x1="754.5" y1="509.5" x2="741.5" y2="522.5" stroke="#000084" stroke-width="2" stroke-linecap="butt"/>
<line x1="936" y1="40" x2="936" y2="129" stroke="#840000" stroke-width="2" stroke-linecap="butt"/>
<line x1="936" y1="629" x2="936" y2="720" stroke="#840000" stroke-width="2" stroke-linecap="butt"/>
<path d="M919,96.32 L928.1,101 L928.1,93.46M924.46,95.28 L932,95.28M925.24,87.09 L923.68,88.65 L920.56,88.65 L919,87.09 L919,82.93 L920.56,81.37 L923.68,81.37 L925.24,82.93 L925.24,87.09 L926.8,88.65 L930.44,88.65 L932,87.09 L932,82.93 L930.44,81.37 L926.8,81.37 L925.24,82.93" stroke="#840000" stroke-width="2" fill="none" stroke-linecap="round" stroke-linejoin="round"/>
<path d="M941,228.8 L929,228.8 L929,223.49 L930.68,221.67 L933.56,221.67 L935.24,223.49 L935.24,228.8M935.24,224.78 L941,221.67M929,217.52 L941,209.15M929,209.15 L941,217.52M929,198.41 L929,204.41 L941,204.41 L941,198.41M934.76,204.41 L934.76,200.76M941,193.12 L929,193.12 L941,186.26 L929,186.26M941,183.03 L929,178.95 L941,174.87M937.4,181.68 L937.4,176.21M934.52,169.85 L934.52,164.37 L935.84,162.93 L939.56,162.93 L941,164.37 L941,169.85 L929,169.85 L929,164.76 L930.2,163.46 L933.32,163.46 L934.52,164.76M929,157.88 L941,157.88 L941,152.31M929,141.3 L929,147.31 L941,147.31 L941,141.3M934.76,147.31 L934.76,143.65" stroke="#008484" stroke-width="2" fill="none" stroke-linecap="round" stroke-linejoin="round"/>
<path d="M923.55,675.81 L919,671.78 L932,671.78M932,675.81 L932,668.79M919,664.37 L919,656.7 L924.46,660.87 L924.46,658.72 L926.41,656.7 L930.18,656.7 L932,658.59 L932,662.76 L930.44,664.37" stroke="#840000" stroke-width="2" fill="none" stroke-linecap="round" stroke-linejoin="round"/>
<path d="M929,616 L941,611.67 L929,607.32M930.2,596.69 L929,597.98 L929,601.71 L930.92,603.78 L939.08,603.78 L941,601.71 L941,597.98 L939.8,596.69M930.2,584.45 L929,585.73 L929,589.47 L930.92,591.53 L939.08,591.53 L941,589.47 L941,585.73 L939.8,584.45M929,580.23 L929,573.76M929,576.99 L941,576.99M929,570.35 L941,562.18M929,562.18 L941,570.35M941,557.56 L929,557.56 L937.4,553.29 L929,549.02 L941,549.02M929,544.97 L941,536.8M929,536.8 L941,544.97" stroke="#008484" stroke-width="2" fill="none" stroke-linecap="round" stroke-linejoin="round"/>
<line x1="961" y1="40" x2="961" y2="129" stroke="#840000" stroke-width="2" stroke-linecap="butt"/>
<line x1="961" y1="629" x2="961" y2="720" stroke="#840000" stroke-width="2" stroke-linecap="butt"/>
<path d="M944,96.32 L953.1,101 L953.1,93.46M949.46,95.28 L957,95.28M944,88.65 L944,80.85 L957,86.57" stroke="#840000" stroke-width="2" fill="none" stroke-linecap="round" stroke-linejoin="round"/>
<path d="M954,227.9 L954,221.25M954,224.57 L966,224.57M954,217.75 L966,209.36M954,209.36 L966,217.75M954,198.58 L954,204.6 L966,204.6 L966,198.58M959.76,204.6 L959.76,200.94M966,193.28 L954,193.28 L966,186.4 L954,186.4M966,183.15 L954,179.07 L966,174.97M962.4,181.8 L962.4,176.32M959.52,169.94 L959.52,164.44 L960.84,163 L964.56,163 L966,164.44 L966,169.94 L954,169.94 L954,164.83 L955.2,163.52 L958.32,163.52 L959.52,164.83M954,157.93 L966,157.93 L966,152.34M954,141.3 L954,147.32 L966,147.32 L966,141.3M959.76,147.32 L959.76,143.66" stroke="#008484" stroke-width="2" fill="none" stroke-linecap="round" stroke-linejoin="round"/>
<path d="M948.55,676.07 L944,672.04 L957,672.04M957,676.07 L957,669.05M944,659.56 L953.1,664.24 L953.1,656.7M949.46,658.52 L957,658.52" stroke="#840000" stroke-width="2" fill="none" stroke-linecap="round" stroke-linejoin="round"/>
<path d="M966,616 L954,616 L954,610.69 L955.68,608.83 L958.56,608.83 L960.24,610.69 L960.24,616M966,604.96 L954,600.8 L966,596.63M962.4,603.59 L962.4,598M959.52,591.52 L959.52,585.92 L960.84,584.46 L964.56,584.46 L966,585.92 L966,591.52 L954,591.52 L954,586.32 L955.2,584.99 L958.32,584.99 L959.52,586.32M954,579.93 L966,579.93M966,576.37 L954,572.22 L966,568.05M962.4,575 L962.4,569.42M955.2,555.7 L954,557.03 L954,561.29 L955.56,563.03 L958.44,563.03 L960,561.29 L960,557.43 L961.56,555.7 L964.44,555.7 L966,557.43 L966,561.69 L964.8,563.03" stroke="#008484" stroke-width="2" fill="none" stroke-linecap="round" stroke-linejoin="round"/>
<line x1="986" y1="40" x2="986" y2="129" stroke="#840000" stroke-width="2" stroke-linecap="butt"/>
<line x1="986" y1="629" x2="986" y2="720" stroke="#840000" stroke-width="2" stroke-linecap="butt"/>
<path d="M969,96.32 L978.1,101 L978.1,93.46M974.46,95.28 L982,95.28M969,82.67 L969,86.57 L971.08,88.65 L980.05,88.65 L982,86.7 L982,83.32 L980.05,81.37 L976.8,81.37 L974.85,83.32 L974.85,86.7 L976.8,88.65" stroke="#840000" stroke-width="2" fill="none" stroke-linecap="round" stroke-linejoin="round"/>
<path d="M979,223.1 L991,218.76 L979,214.4M980.2,203.75 L979,205.04 L979,208.79 L980.92,210.85 L989.08,210.85 L991,208.79 L991,205.04 L989.8,203.75M980.2,191.48 L979,192.77 L979,196.51 L980.92,198.58 L989.08,198.58 L991,196.51 L991,192.77 L989.8,191.48M991,185.95 L979,185.95 L979,180.76 L980.68,178.98 L983.56,178.98 L985.24,180.76 L985.24,185.95M985.24,182.02 L991,178.98M979,174.92 L991,166.74M979,166.74 L991,174.92M991,162.1 L979,162.1 L987.4,157.82 L979,153.55 L991,153.55M979,149.49 L991,141.3M979,141.3 L991,149.49" stroke="#008484" stroke-width="2" fill="none" stroke-linecap="round" stroke-linejoin="round"/>
<path d="M973.55,675.81 L969,671.78 L982,671.78M982,675.81 L982,668.79M969,657.22 L969,663.2 L974.98,663.72 L974.46,662.42 L974.46,658.52 L976.28,656.7 L980.18,656.7 L982,658.52 L982,662.42 L980.44,663.98" stroke="#840000" stroke-width="2" fill="none" stroke-linecap="round" stroke-linejoin="round"/>
<path d="M980.2,609 L979,610.27 L979,614.34 L980.56,616 L983.44,616 L985,614.34 L985,610.65 L986.56,609 L989.44,609 L991,610.65 L991,614.73 L989.8,616M980.2,597.33 L979,598.62 L979,602.35 L980.92,604.41 L989.08,604.41 L991,602.35 L991,598.62 L989.8,597.33M979,591.45 L991,591.45 L991,586.01M979,581.13 L991,581.13M979,574 L986.92,581.13M984.04,578.33 L991,574" stroke="#008484" stroke-width="2" fill="none" stroke-linecap="round" stroke-linejoin="round"/>
<line x1="1011" y1="40" x2="1011" y2="129" stroke="#840000" stroke-width="2" stroke-linecap="butt"/>
<line x1="1011" y1="629" x2="1011" y2="720" stroke="#840000" stroke-width="2" stroke-linecap="butt"/>
<path d="M994,96.32 L1003.1,101 L1003.1,93.46M999.46,95.28 L1007,95.28M994,81.89 L994,87.87 L999.98,88.39 L999.46,87.09 L999.46,83.19 L1001.28,81.37 L1005.18,81.37 L1007,83.19 L1007,87.09 L1005.44,88.65" stroke="#840000" stroke-width="2" fill="none" stroke-linecap="round" stroke-linejoin="round"/>
<path d="M1004,211.1 L1004,204.23M1004,207.67 L1016,207.67M1004,200.62 L1016,191.96M1004,191.96 L1016,200.62M1009.52,186.95 L1009.52,181.28 L1010.84,179.79 L1014.56,179.79 L1016,181.28 L1016,186.95 L1004,186.95 L1004,181.68 L1005.2,180.33 L1008.32,180.33 L1009.52,181.68M1009.52,175.1 L1009.52,169.42 L1010.84,167.93 L1014.56,167.93 L1016,169.42 L1016,175.1 L1004,175.1 L1004,169.83 L1005.2,168.47 L1008.32,168.47 L1009.52,169.83M1004,161.17 L1004,157.93 L1005.92,155.77 L1014.08,155.77 L1016,157.93 L1016,161.17 L1014.08,163.34 L1005.92,163.34 L1004,161.17M1013.12,158.47 L1016.48,155.77M1011.32,150.76 L1011.32,141.3" stroke="#008484" stroke-width="2" fill="none" stroke-linecap="round" stroke-linejoin="round"/>
<path d="M998.55,675.81 L994,671.78 L1007,671.78M1007,675.81 L1007,668.79M994,658 L994,661.9 L996.08,663.98 L1005.05,663.98 L1007,662.03 L1007,658.65 L1005.05,656.7 L1001.8,656.7 L999.85,658.65 L999.85,662.03 L1001.8,663.98" stroke="#840000" stroke-width="2" fill="none" stroke-linecap="round" stroke-linejoin="round"/>
<path d="M1005.2,608.64 L1004,609.97 L1004,613.85 L1005.92,616 L1014.08,616 L1016,613.85 L1016,609.97 L1014.8,608.64M1004,602.52 L1016,602.52 L1016,596.86M1004,589.67 L1004,586.49 L1005.92,584.37 L1014.08,584.37 L1016,586.49 L1016,589.67 L1014.08,591.79 L1005.92,591.79 L1004,589.67M1005.2,572.24 L1004,573.57 L1004,577.46 L1005.92,579.6 L1014.08,579.6 L1016,577.46 L1016,573.57 L1014.8,572.24M1004,566.74 L1016,566.74M1004,559.32 L1011.92,566.74M1009.04,563.83 L1016,559.32M1004,552.3 L1004,549.12 L1005.92,547 L1014.08,547 L1016,549.12 L1016,552.3 L1014.08,554.42 L1005.92,554.42 L1004,552.3M1004,542.1 L1014.08,542.1 L1016,539.98 L1016,536.94 L1014.08,534.82 L1004,534.82M1004,531.03 L1004,524.3M1004,527.66 L1016,527.66" stroke="#008484" stroke-width="2" fill="none" stroke-linecap="round" stroke-linejoin="round"/>
<line x1="1036" y1="40" x2="1036" y2="129" stroke="#840000" stroke-width="2" stroke-linecap="butt"/>
<line x1="1036" y1="629" x2="1036" y2="720" stroke="#840000" stroke-width="2" stroke-linecap="butt"/>
<path d="M1019,96.32 L1028.1,101 L1028.1,93.46M1024.46,95.28 L1032,95.28M1019,83.97 L1028.1,88.65 L1028.1,81.11M1024.46,82.93 L1032,82.93" stroke="#840000" stroke-width="2" fill="none" stroke-linecap="round" stroke-linejoin="round"/>
<path d="M1029,211.1 L1029,204.26M1029,207.68 L1041,207.68M1029,200.66 L1041,192.02M1029,192.02 L1041,200.66M1034.52,187.04 L1034.52,181.38 L1035.84,179.9 L1039.56,179.9 L1041,181.38 L1041,187.04 L1029,187.04 L1029,181.78 L1030.2,180.44 L1033.32,180.44 L1034.52,181.78M1034.52,175.22 L1034.52,169.56 L1035.84,168.08 L1039.56,168.08 L1041,169.56 L1041,175.22 L1029,175.22 L1029,169.97 L1030.2,168.62 L1033.32,168.62 L1034.52,169.97M1029,161.35 L1029,158.11 L1030.92,155.96 L1039.08,155.96 L1041,158.11 L1041,161.35 L1039.08,163.5 L1030.92,163.5 L1029,161.35M1038.12,158.65 L1041.48,155.96M1036.32,150.93 L1036.32,141.3M1031.76,146.11 L1040.88,146.11" stroke="#008484" stroke-width="2" fill="none" stroke-linecap="round" stroke-linejoin="round"/>
<path d="M1023.55,676.33 L1019,672.3 L1032,672.3M1032,676.33 L1032,669.31M1019,664.5 L1019,656.7 L1032,662.42" stroke="#840000" stroke-width="2" fill="none" stroke-linecap="round" stroke-linejoin="round"/>
<path d="M1029,616 L1041,608.08M1029,608.08 L1041,616M1029,604.64 L1029,598.36M1029,601.5 L1041,601.5M1041,595.7 L1029,591.84 L1041,587.98M1037.4,594.43 L1037.4,589.25M1029,582.74 L1041,582.74 L1041,577.47M1030.56,572.74 L1029,571.13 L1029,567.31 L1030.56,565.7 L1033.08,565.7 L1041,572.74 L1041,565.7" stroke="#008484" stroke-width="2" fill="none" stroke-linecap="round" stroke-linejoin="round"/>
<line x1="1061" y1="40" x2="1061" y2="129" stroke="#840000" stroke-width="2" stroke-linecap="butt"/>
<line x1="1061" y1="629" x2="1061" y2="720" stroke="#840000" stroke-width="2" stroke-linecap="butt"/>
<path d="M1044,96.32 L1053.1,101 L1053.1,93.46M1049.46,95.28 L1057,95.28M1044,89.04 L1044,81.37 L1049.46,85.54 L1049.46,83.38 L1051.41,81.37 L1055.18,81.37 L1057,83.25 L1057,87.43 L1055.44,89.04" stroke="#840000" stroke-width="2" fill="none" stroke-linecap="round" stroke-linejoin="round"/>
<path d="M1054,204.1 L1054,197.2M1054,200.65 L1066,200.65M1054,193.57 L1066,184.86M1054,184.86 L1066,193.57M1059.52,179.83 L1059.52,174.12 L1060.84,172.63 L1064.56,172.63 L1066,174.12 L1066,179.83 L1054,179.83 L1054,174.53 L1055.2,173.17 L1058.32,173.17 L1059.52,174.53M1059.52,167.91 L1059.52,162.2 L1060.84,160.71 L1064.56,160.71 L1066,162.2 L1066,167.91 L1054,167.91 L1054,162.61 L1055.2,161.25 L1058.32,161.25 L1059.52,162.61M1054,156.09 L1066,156.09M1061.32,151.02 L1061.32,141.3M1056.76,146.15 L1065.88,146.15" stroke="#008484" stroke-width="2" fill="none" stroke-linecap="round" stroke-linejoin="round"/>
<path d="M1048.55,675.81 L1044,671.78 L1057,671.78M1057,675.81 L1057,668.79M1050.24,662.42 L1048.68,663.98 L1045.56,663.98 L1044,662.42 L1044,658.26 L1045.56,656.7 L1048.68,656.7 L1050.24,658.26 L1050.24,662.42 L1051.8,663.98 L1055.44,663.98 L1057,662.42 L1057,658.26 L1055.44,656.7 L1051.8,656.7 L1050.24,658.26" stroke="#840000" stroke-width="2" fill="none" stroke-linecap="round" stroke-linejoin="round"/>
<path d="M1054,616 L1066,608.03M1054,608.03 L1066,616M1054,604.55 L1054,598.23M1054,601.39 L1066,601.39M1066,595.55 L1054,591.66 L1066,587.77M1062.4,594.27 L1062.4,589.05M1054,582.5 L1066,582.5 L1066,577.18M1058.2,572.42 L1054,568.56 L1066,568.56M1066,572.42 L1066,565.7" stroke="#008484" stroke-width="2" fill="none" stroke-linecap="round" stroke-linejoin="round"/>
<line x1="1086" y1="40" x2="1086" y2="129" stroke="#840000" stroke-width="2" stroke-linecap="butt"/>
<line x1="1086" y1="629" x2="1086" y2="720" stroke="#840000" stroke-width="2" stroke-linecap="butt"/>
<path d="M1069,96.32 L1078.1,101 L1078.1,93.46M1074.46,95.28 L1082,95.28M1070.69,88.65 L1069,86.96 L1069,82.93 L1070.69,81.24 L1073.42,81.24 L1082,88.65 L1082,81.24" stroke="#840000" stroke-width="2" fill="none" stroke-linecap="round" stroke-linejoin="round"/>
<path d="M1079,204.1 L1079,197.17M1079,200.63 L1091,200.63M1079,193.53 L1091,184.78M1079,184.78 L1091,193.53M1084.52,179.73 L1084.52,174 L1085.84,172.5 L1089.56,172.5 L1091,174 L1091,179.73 L1079,179.73 L1079,174.41 L1080.2,173.05 L1083.32,173.05 L1084.52,174.41M1084.52,167.77 L1084.52,162.04 L1085.84,160.54 L1089.56,160.54 L1091,162.04 L1091,167.77 L1079,167.77 L1079,162.45 L1080.2,161.08 L1083.32,161.08 L1084.52,162.45M1079,155.9 L1091,155.9M1086.32,150.85 L1086.32,141.3" stroke="#008484" stroke-width="2" fill="none" stroke-linecap="round" stroke-linejoin="round"/>
<path d="M1073.55,675.81 L1069,671.78 L1082,671.78M1082,675.81 L1082,668.79M1082,662.68 L1082,658.78 L1079.92,656.7 L1070.95,656.7 L1069,658.65 L1069,662.03 L1070.95,663.98 L1074.2,663.98 L1076.15,662.03 L1076.15,658.65 L1074.2,656.7" stroke="#840000" stroke-width="2" fill="none" stroke-linecap="round" stroke-linejoin="round"/>
<path d="M1079,616 L1091,611.81 L1079,607.6M1080.2,597.31 L1079,598.56 L1079,602.17 L1080.92,604.17 L1089.08,604.17 L1091,602.17 L1091,598.56 L1089.8,597.31M1080.2,585.46 L1079,586.71 L1079,590.32 L1080.92,592.32 L1089.08,592.32 L1091,590.32 L1091,586.71 L1089.8,585.46M1079,580.98 L1091,573.08M1079,573.08 L1091,580.98M1079,569.64 L1079,563.37M1079,566.5 L1091,566.5M1091,560.71 L1079,556.86 L1091,553M1087.4,559.43 L1087.4,554.27M1079,547.77 L1091,547.77 L1091,542.5" stroke="#008484" stroke-width="2" fill="none" stroke-linecap="round" stroke-linejoin="round"/>
<line x1="1111" y1="40" x2="1111" y2="129" stroke="#840000" stroke-width="2" stroke-linecap="butt"/>
<line x1="1111" y1="629" x2="1111" y2="720" stroke="#840000" stroke-width="2" stroke-linecap="butt"/>
<path d="M1094,96.32 L1103.1,101 L1103.1,93.46M1099.46,95.28 L1107,95.28M1098.55,88.65 L1094,84.62 L1107,84.62M1107,88.65 L1107,81.63" stroke="#840000" stroke-width="2" fill="none" stroke-linecap="round" stroke-linejoin="round"/>
<path d="M1104,217.4 L1116,213.16 L1104,208.91M1105.2,198.5 L1104,199.76 L1104,203.42 L1105.92,205.44 L1114.08,205.44 L1116,203.42 L1116,199.76 L1114.8,198.5M1105.2,186.52 L1104,187.78 L1104,191.43 L1105.92,193.45 L1114.08,193.45 L1116,191.43 L1116,187.78 L1114.8,186.52M1116,181.11 L1104,181.11 L1104,176.04 L1105.68,174.3 L1108.56,174.3 L1110.24,176.04 L1110.24,181.11M1110.24,177.27 L1116,174.3M1104,170.34 L1116,162.34M1104,162.34 L1116,170.34M1104,151.86 L1104,157.81 L1116,157.81M1109.76,157.81 L1109.76,153.6M1104,146.63 L1116,146.63 L1116,141.3" stroke="#008484" stroke-width="2" fill="none" stroke-linecap="round" stroke-linejoin="round"/>
<path d="M1095.69,675.94 L1094,674.25 L1094,670.22 L1095.69,668.53 L1098.42,668.53 L1107,675.94 L1107,668.53M1094,661.77 L1094,658.65 L1095.95,656.7 L1105.05,656.7 L1107,658.65 L1107,661.77 L1105.05,663.72 L1095.95,663.72 L1094,661.77" stroke="#840000" stroke-width="2" fill="none" stroke-linecap="round" stroke-linejoin="round"/>
<path d="M1104,616 L1116,611.5 L1104,606.99M1105.2,595.96 L1104,597.29 L1104,601.17 L1105.92,603.31 L1114.08,603.31 L1116,601.17 L1116,597.29 L1114.8,595.96M1105.2,583.24 L1104,584.58 L1104,588.45 L1105.92,590.6 L1114.08,590.6 L1116,588.45 L1116,584.58 L1114.8,583.24M1104,576.89 L1116,576.89 L1116,572.55 L1113.36,569.67 L1106.64,569.67 L1104,572.55 L1104,576.89M1104,564.61 L1116,564.61M1105.2,552.4 L1104,553.71 L1104,557.52 L1105.92,559.62 L1114.08,559.62 L1116,557.52 L1116,554.24 L1114.32,552.4 L1110.48,552.4 L1110.48,555.15" stroke="#008484" stroke-width="2" fill="none" stroke-linecap="round" stroke-linejoin="round"/>
<line x1="1136" y1="40" x2="1136" y2="129" stroke="#840000" stroke-width="2" stroke-linecap="butt"/>
<line x1="1136" y1="629" x2="1136" y2="720" stroke="#840000" stroke-width="2" stroke-linecap="butt"/>
<path d="M1119,96.32 L1128.1,101 L1128.1,93.46M1124.46,95.28 L1132,95.28M1119,86.7 L1119,83.58 L1120.95,81.63 L1130.05,81.63 L1132,83.58 L1132,86.7 L1130.05,88.65 L1120.95,88.65 L1119,86.7" stroke="#840000" stroke-width="2" fill="none" stroke-linecap="round" stroke-linejoin="round"/>
<path d="M1141,185.8 L1129,185.8 L1129,180.36 L1130.68,178.51 L1133.56,178.51 L1135.24,180.36 L1135.24,185.8M1135.24,181.69 L1141,178.51M1129,174.26 L1141,165.7M1129,165.7 L1141,174.26M1129,160.85 L1141,160.85M1129,153.51 L1141,153.51M1134.76,160.85 L1134.76,153.51M1141,148.49 L1129,148.49 L1129,143.16 L1130.68,141.3 L1133.56,141.3 L1135.24,143.16 L1135.24,148.49" stroke="#008484" stroke-width="2" fill="none" stroke-linecap="round" stroke-linejoin="round"/>
<path d="M1120.69,675.94 L1119,674.25 L1119,670.22 L1120.69,668.53 L1123.42,668.53 L1132,675.94 L1132,668.53M1123.55,663.72 L1119,659.69 L1132,659.69M1132,663.72 L1132,656.7" stroke="#840000" stroke-width="2" fill="none" stroke-linecap="round" stroke-linejoin="round"/>
<path d="M1129,616 L1141,611.59 L1129,607.17M1130.2,596.36 L1129,597.67 L1129,601.46 L1130.92,603.57 L1139.08,603.57 L1141,601.46 L1141,597.67 L1139.8,596.36M1130.2,583.9 L1129,585.2 L1129,589 L1130.92,591.1 L1139.08,591.1 L1141,589 L1141,585.2 L1139.8,583.9M1130.2,571.43 L1129,572.74 L1129,576.54 L1130.92,578.64 L1139.08,578.64 L1141,576.54 L1141,572.74 L1139.8,571.43M1141,565.98 L1129,565.98 L1129,560.8 L1130.68,559 L1133.56,559 L1135.24,560.8 L1135.24,565.98" stroke="#008484" stroke-width="2" fill="none" stroke-linecap="round" stroke-linejoin="round"/>
<line x1="1161" y1="40" x2="1161" y2="129" stroke="#840000" stroke-width="2" stroke-linecap="butt"/>
<line x1="1161" y1="629" x2="1161" y2="720" stroke="#840000" stroke-width="2" stroke-linecap="butt"/>
<path d="M1144,101 L1144,93.33 L1149.46,97.5 L1149.46,95.34 L1151.41,93.33 L1155.18,93.33 L1157,95.22 L1157,99.39 L1155.44,101M1157,87.13 L1157,83.23 L1154.92,81.15 L1145.95,81.15 L1144,83.1 L1144,86.48 L1145.95,88.43 L1149.2,88.43 L1151.15,86.48 L1151.15,83.1 L1149.2,81.15" stroke="#840000" stroke-width="2" fill="none" stroke-linecap="round" stroke-linejoin="round"/>
<path d="M1154,232 L1166,227.74 L1154,223.48M1155.2,213.04 L1154,214.3 L1154,217.97 L1155.92,220 L1164.08,220 L1166,217.97 L1166,214.3 L1164.8,213.04M1155.2,201.01 L1154,202.28 L1154,205.94 L1155.92,207.97 L1164.08,207.97 L1166,205.94 L1166,202.28 L1164.8,201.01M1166,195.59 L1154,195.59 L1154,190.5 L1155.68,188.76 L1158.56,188.76 L1160.24,190.5 L1160.24,195.59M1160.24,191.74 L1166,188.76M1154,184.78 L1166,176.76M1154,176.76 L1166,184.78M1154,172.13 L1166,167.87 L1154,163.6M1155.2,153.08 L1154,154.32 L1154,157.92 L1155.92,159.91 L1164.08,159.91 L1166,157.92 L1166,154.82 L1164.32,153.08 L1160.48,153.08 L1160.48,155.68M1166,149.12 L1154,145.22 L1166,141.3M1162.4,147.83 L1162.4,142.59" stroke="#008484" stroke-width="2" fill="none" stroke-linecap="round" stroke-linejoin="round"/>
<path d="M1145.69,676.33 L1144,674.64 L1144,670.61 L1145.69,668.92 L1148.42,668.92 L1157,676.33 L1157,668.92M1145.69,664.11 L1144,662.42 L1144,658.39 L1145.69,656.7 L1148.42,656.7 L1157,664.11 L1157,656.7" stroke="#840000" stroke-width="2" fill="none" stroke-linecap="round" stroke-linejoin="round"/>
<path d="M1155.2,608.69 L1154,610.01 L1154,613.87 L1155.92,616 L1164.08,616 L1166,613.87 L1166,610.55 L1164.32,608.69 L1160.48,608.69 L1160.48,611.47M1166,602.6 L1154,602.6 L1166,595.57 L1154,595.57M1154,590 L1166,590 L1166,585.6 L1163.36,582.68 L1156.64,582.68 L1154,585.6 L1154,590M1155.2,570.25 L1154,571.6 L1154,575.53 L1155.92,577.7 L1164.08,577.7 L1166,575.53 L1166,571.6 L1164.8,570.25M1166,564.61 L1154,564.61 L1154,559.26 L1155.68,557.4 L1158.56,557.4 L1160.24,559.26 L1160.24,564.61" stroke="#008484" stroke-width="2" fill="none" stroke-linecap="round" stroke-linejoin="round"/>
<line x1="1186" y1="40" x2="1186" y2="129" stroke="#840000" stroke-width="2" stroke-linecap="butt"/>
<line x1="1186" y1="629" x2="1186" y2="720" stroke="#840000" stroke-width="2" stroke-linecap="butt"/>
<path d="M1169,101 L1169,93.33 L1174.46,97.5 L1174.46,95.34 L1176.41,93.33 L1180.18,93.33 L1182,95.22 L1182,99.39 L1180.44,101M1175.24,86.87 L1173.68,88.43 L1170.56,88.43 L1169,86.87 L1169,82.71 L1170.56,81.15 L1173.68,81.15 L1175.24,82.71 L1175.24,86.87 L1176.8,88.43 L1180.44,88.43 L1182,86.87 L1182,82.71 L1180.44,81.15 L1176.8,81.15 L1175.24,82.71" stroke="#840000" stroke-width="2" fill="none" stroke-linecap="round" stroke-linejoin="round"/>
<path d="M1191,206.7 L1179,206.7 L1179,201.05 L1180.68,199.12 L1183.56,199.12 L1185.24,201.05 L1185.24,206.7M1185.24,202.42 L1191,199.12M1179,194.7 L1191,185.8M1179,185.8 L1191,194.7M1184.52,180.66 L1184.52,174.83 L1185.84,173.31 L1189.56,173.31 L1191,174.83 L1191,180.66 L1179,180.66 L1179,175.25 L1180.2,173.86 L1183.32,173.86 L1184.52,175.25M1184.52,168.49 L1184.52,162.66 L1185.84,161.13 L1189.56,161.13 L1191,162.66 L1191,168.49 L1179,168.49 L1179,163.07 L1180.2,161.68 L1183.32,161.68 L1184.52,163.07M1179,156.41 L1191,156.41M1186.32,151.23 L1186.32,141.3M1181.76,146.26 L1190.88,146.26" stroke="#008484" stroke-width="2" fill="none" stroke-linecap="round" stroke-linejoin="round"/>
<path d="M1170.69,676.2 L1169,674.51 L1169,670.48 L1170.69,668.79 L1173.42,668.79 L1182,676.2 L1182,668.79M1169,664.37 L1169,656.7 L1174.46,660.87 L1174.46,658.72 L1176.41,656.7 L1180.18,656.7 L1182,658.59 L1182,662.76 L1180.44,664.37" stroke="#840000" stroke-width="2" fill="none" stroke-linecap="round" stroke-linejoin="round"/>
<path d="M1180.2,608.52 L1179,609.88 L1179,613.82 L1180.92,616 L1189.08,616 L1191,613.82 L1191,609.88 L1189.8,608.52M1191,602.86 L1179,602.86 L1179,597.5 L1180.68,595.63 L1183.56,595.63 L1185.24,597.5 L1185.24,602.86M1179,588.18 L1179,584.95 L1180.92,582.8 L1189.08,582.8 L1191,584.95 L1191,588.18 L1189.08,590.33 L1180.92,590.33 L1179,588.18M1179,577.82 L1189.08,577.82 L1191,575.67 L1191,572.58 L1189.08,570.42 L1179,570.42M1179,566.58 L1179,559.75M1179,563.16 L1191,563.16M1186.32,555.42 L1186.32,545.8M1181.76,550.6 L1190.88,550.6" stroke="#008484" stroke-width="2" fill="none" stroke-linecap="round" stroke-linejoin="round"/>
<line x1="1211" y1="40" x2="1211" y2="129" stroke="#840000" stroke-width="2" stroke-linecap="butt"/>
<line x1="1211" y1="629" x2="1211" y2="720" stroke="#840000" stroke-width="2" stroke-linecap="butt"/>
<path d="M1194,101 L1194,93.33 L1199.46,97.5 L1199.46,95.34 L1201.41,93.33 L1205.18,93.33 L1207,95.22 L1207,99.39 L1205.44,101M1194,88.43 L1194,80.63 L1207,86.35" stroke="#840000" stroke-width="2" fill="none" stroke-linecap="round" stroke-linejoin="round"/>
<path d="M1216,206.7 L1204,206.7 L1204,201.03 L1205.68,199.09 L1208.56,199.09 L1210.24,201.03 L1210.24,206.7M1210.24,202.41 L1216,199.09M1204,194.66 L1216,185.72M1204,185.72 L1216,194.66M1209.52,180.57 L1209.52,174.71 L1210.84,173.18 L1214.56,173.18 L1216,174.71 L1216,180.57 L1204,180.57 L1204,175.13 L1205.2,173.74 L1208.32,173.74 L1209.52,175.13M1209.52,168.34 L1209.52,162.49 L1210.84,160.95 L1214.56,160.95 L1216,162.49 L1216,168.34 L1204,168.34 L1204,162.9 L1205.2,161.51 L1208.32,161.51 L1209.52,162.9M1204,156.21 L1216,156.21M1211.32,151.06 L1211.32,141.3" stroke="#008484" stroke-width="2" fill="none" stroke-linecap="round" stroke-linejoin="round"/>
<path d="M1195.69,676.46 L1194,674.77 L1194,670.74 L1195.69,669.05 L1198.42,669.05 L1207,676.46 L1207,669.05M1194,659.56 L1203.1,664.24 L1203.1,656.7M1199.46,658.52 L1207,658.52" stroke="#840000" stroke-width="2" fill="none" stroke-linecap="round" stroke-linejoin="round"/>
<path d="M1205.2,608.5 L1204,609.86 L1204,613.81 L1205.92,616 L1214.08,616 L1216,613.81 L1216,609.86 L1214.8,608.5M1216,602.82 L1204,602.82 L1204,597.43 L1205.68,595.56 L1208.56,595.56 L1210.24,597.43 L1210.24,602.82M1204,588.08 L1204,584.84 L1205.92,582.68 L1214.08,582.68 L1216,584.84 L1216,588.08 L1214.08,590.24 L1205.92,590.24 L1204,588.08M1204,577.69 L1214.08,577.69 L1216,575.53 L1216,572.43 L1214.08,570.27 L1204,570.27M1204,566.41 L1204,559.55M1204,562.98 L1216,562.98M1211.32,555.25 L1211.32,545.8" stroke="#008484" stroke-width="2" fill="none" stroke-linecap="round" stroke-linejoin="round"/>
<path d="M1054.9,357 L1054.9,369.6 L1057.41,372 L1061.01,372 L1063.52,369.6 L1063.52,357M1069.32,362.25 L1074.19,357 L1074.19,372M1069.32,372 L1077.79,372M1083.59,357 L1093,357 L1086.1,372" stroke="#008484" stroke-width="2" fill="none" stroke-linecap="round" stroke-linejoin="round"/>
<path d="M1026,397.1 L1026,382.1 L1031.1,392.6 L1036.19,382.1 L1036.19,397.1M1040.25,397.1 L1045,382.1 L1049.76,397.1M1041.82,392.6 L1048.19,392.6M1054.7,382.1 L1064.45,397.1M1064.45,382.1 L1054.7,397.1M1069.98,384.05 L1071.95,382.1 L1076.67,382.1 L1078.65,384.05 L1078.65,387.2 L1069.98,397.1 L1078.65,397.1M1086.1,389.3 L1084.27,387.5 L1084.27,383.9 L1086.1,382.1 L1090.97,382.1 L1092.79,383.9 L1092.79,387.5 L1090.97,389.3 L1086.1,389.3 L1084.27,391.1 L1084.27,395.3 L1086.1,397.1 L1090.97,397.1 L1092.79,395.3 L1092.79,391.1 L1090.97,389.3M1097.96,382.1 L1106.94,382.1 L1102.06,388.4 L1104.58,388.4 L1106.94,390.65 L1106.94,395 L1104.73,397.1 L1099.85,397.1 L1097.96,395.3M1112.67,382.1 L1121.8,382.1 L1115.11,397.1" stroke="#008484" stroke-width="2" fill="none" stroke-linecap="round" stroke-linejoin="round"/>
<path d="M1238,247 L1238,234 L1243.29,234 L1245.1,235.82 L1245.1,238.94 L1243.29,240.76 L1238,240.76M1242,240.76 L1245.1,247M1249.23,234 L1257.57,247M1257.57,234 L1249.23,247" stroke="#008484" stroke-width="2" fill="none" stroke-linecap="round" stroke-linejoin="round"/>
<path d="M1238,272 L1238,259 L1243.29,259 L1245.1,260.82 L1245.1,263.94 L1243.29,265.76 L1238,265.76M1242,265.76 L1245.1,272M1249.23,259 L1257.57,272M1257.57,259 L1249.23,272" stroke="#008484" stroke-width="2" fill="none" stroke-linecap="round" stroke-linejoin="round"/>
<path d="M1242.4,434.3 L1246.82,447.3 L1251.25,434.3M1262.1,435.6 L1260.78,434.3 L1256.97,434.3 L1254.87,436.38 L1254.87,445.22 L1256.97,447.3 L1260.78,447.3 L1262.1,446" stroke="#008484" stroke-width="2" fill="none" stroke-linecap="round" stroke-linejoin="round"/>
<path d="M1246.1,465.48 L1251.56,465.48 L1252.99,466.91 L1252.99,470.94 L1251.56,472.5 L1246.1,472.5 L1246.1,459.5 L1251.17,459.5 L1252.47,460.8 L1252.47,464.18 L1251.17,465.48M1257.41,464.05 L1261.44,459.5 L1261.44,472.5M1257.41,472.5 L1264.43,472.5" stroke="#008484" stroke-width="2" fill="none" stroke-linecap="round" stroke-linejoin="round"/>
<path d="M1248.8,485.9 L1247.51,484.6 L1243.77,484.6 L1241.7,486.68 L1241.7,495.52 L1243.77,497.6 L1246.99,497.6 L1248.8,495.78 L1248.8,491.62 L1246.09,491.62M1254.7,497.6 L1254.7,484.6 L1261.53,497.6 L1261.53,484.6" stroke="#008484" stroke-width="2" fill="none" stroke-linecap="round" stroke-linejoin="round"/>
<path d="M1252.88,509 L1246.9,509 L1246.9,522 L1252.88,522M1246.9,515.24 L1250.54,515.24" stroke="#008484" stroke-width="2" fill="none" stroke-linecap="round" stroke-linejoin="round"/>
<line x1="39" y1="666.5" x2="1257" y2="666.5" stroke="#000000" stroke-width="1" stroke-linecap="butt"/>
<rect x="935" y="666" width="2" height="1" fill="#7ad8d8"/>
<rect x="960" y="666" width="2" height="1" fill="#7ad8d8"/>
<rect x="985" y="666" width="2" height="1" fill="#7ad8d8"/>
<rect x="1010" y="666" width="2" height="1" fill="#7ad8d8"/>
<rect x="1035" y="666" width="2" height="1" fill="#7ad8d8"/>
<rect x="1060" y="666" width="2" height="1" fill="#7ad8d8"/>
<rect x="1085" y="666" width="2" height="1" fill="#7ad8d8"/>
<rect x="1110" y="666" width="2" height="1" fill="#7ad8d8"/>
<rect x="1135" y="666" width="2" height="1" fill="#7ad8d8"/>
<rect x="1160" y="666" width="2" height="1" fill="#7ad8d8"/>
<rect x="1185" y="666" width="2" height="1" fill="#7ad8d8"/>
<rect x="1210" y="666" width="2" height="1" fill="#7ad8d8"/>
</svg>
</div>
<div id="vscroll" class="abs"></div>
<div id="vtrack" class="abs"></div>
<div id="vthumb" class="abs"></div>
<div class="sbtn" style="left:1261px;top:83px"><svg width="13" height="13" style="position:absolute;left:0;top:0"><path d="M2.5 9 L6.5 4.5 L10.5 9 Z" fill="#1e1e1e"/></svg></div>
<div class="sbtn" style="left:1261px;top:658px"><svg width="13" height="13" style="position:absolute;left:0;top:0"><path d="M2.5 4 L6.5 8.5 L10.5 4 Z" fill="#1e1e1e"/></svg></div>
<div id="hscroll" class="abs"></div>
<div id="htrack" class="abs"></div>
<div id="hthumb" class="abs"></div>
<div class="sbtn" style="left:40px;top:678px;width:14px;height:14px"><svg width="13" height="13" style="position:absolute;left:0;top:0"><path d="M8.5 2.5 L4 6.5 L8.5 10.5 Z" fill="#1e1e1e"/></svg></div>
<div class="sbtn" style="left:1243px;top:678px;width:14px;height:14px"><svg width="13" height="13" style="position:absolute;left:0;top:0"><path d="M4.5 2.5 L9 6.5 L4.5 10.5 Z" fill="#1e1e1e"/></svg></div>
<div id="rpanel" class="abs">

</div>
<svg width="1316" height="743" style="position:absolute;left:0;top:0;pointer-events:none"><defs>
<linearGradient id="gTray" x1="0" y1="0" x2="0" y2="1"><stop offset="0" stop-color="#f2f2f2"/><stop offset="1" stop-color="#a9a9a9"/></linearGradient>
<linearGradient id="gPage" x1="0" y1="0" x2="1" y2="1"><stop offset="0" stop-color="#ffffff"/><stop offset="1" stop-color="#dedede"/></linearGradient>
<linearGradient id="gGreen" x1="0" y1="0" x2="0" y2="1"><stop offset="0" stop-color="#c6e24a"/><stop offset="1" stop-color="#6aa61c"/></linearGradient>
<radialGradient id="gLens" cx="0.45" cy="0.4" r="0.6"><stop offset="0" stop-color="#dbe9f8"/><stop offset="1" stop-color="#5e8fd0"/></radialGradient>
<radialGradient id="gBug" cx="0.4" cy="0.35" r="0.7"><stop offset="0" stop-color="#ff6060"/><stop offset="1" stop-color="#b00000"/></radialGradient>
<linearGradient id="gPanelL" x1="0" y1="0" x2="0" y2="1"><stop offset="0" stop-color="#e8e6e4"/><stop offset="1" stop-color="#c9c5c3"/></linearGradient>
</defs><line x1="43.5" y1="51" x2="43.5" y2="75" stroke="#a8a4a2" stroke-width="1"/>
<line x1="86.5" y1="51" x2="86.5" y2="75" stroke="#a8a4a2" stroke-width="1"/>
<line x1="129.5" y1="51" x2="129.5" y2="75" stroke="#a8a4a2" stroke-width="1"/>
<line x1="240.5" y1="51" x2="240.5" y2="75" stroke="#a8a4a2" stroke-width="1"/>
<line x1="317.5" y1="51" x2="317.5" y2="75" stroke="#a8a4a2" stroke-width="1"/>
<line x1="394.5" y1="51" x2="394.5" y2="75" stroke="#a8a4a2" stroke-width="1"/>
<line x1="539.5" y1="51" x2="539.5" y2="75" stroke="#a8a4a2" stroke-width="1"/>
<line x1="616.5" y1="51" x2="616.5" y2="75" stroke="#a8a4a2" stroke-width="1"/>
<line x1="693.5" y1="51" x2="693.5" y2="75" stroke="#a8a4a2" stroke-width="1"/>
<line x1="838.5" y1="51" x2="838.5" y2="75" stroke="#a8a4a2" stroke-width="1"/>
<path d="M10.5,65 L14,56.5 L30,56.5 L33.5,65 L33.5,73.5 Q33.5,74.5 32.5,74.5 L11.5,74.5 Q10.5,74.5 10.5,73.5 Z" fill="url(#gTray)" stroke="#8e8e8e" stroke-width="1"/>
<rect x="13" y="67" width="18" height="3" fill="#8a8a8a"/>
<path d="M20,51 L27,51 L27,57 L31,57 L23.5,64 L16,57 L20,57 Z" fill="url(#gGreen)" stroke="#5b9a18" stroke-width="0.8"/>
<path d="M54,52 L71,52 L77,58 L77,76 L54,76 Z" fill="url(#gPage)" stroke="#666" stroke-width="1"/>
<path d="M71,52 L71,58 L77,58" fill="#eee" stroke="#888" stroke-width="0.8"/>
<path d="M60.5,54 L60.5,74 M55,65 L75,65" stroke="#222" stroke-width="1.3"/>
<path d="M58,57 L60.5,53.5 L63,57 Z M58,71 L60.5,74.5 L63,71 Z M55.5,62.5 L55.5,67.5 L52.5,65 Z M72.5,62.5 L75.5,65 L72.5,67.5 Z" fill="#222"/>
<rect x="65.5" y="70" width="11" height="6" fill="#fff" stroke="#8a2020" stroke-width="1"/>
<path d="M67,73 h3 M71.5,73 h3" stroke="#333" stroke-width="1.2"/>
<path d="M101,52 L112,52 L115,55 L115,61 L101,61 Z" fill="#f8f8f8" stroke="#777" stroke-width="0.9"/>
<rect x="97.5" y="59.5" width="21" height="10" rx="2" fill="url(#gTray)" stroke="#666" stroke-width="1"/>
<rect x="101" y="61" width="14" height="4" fill="#2a2a2a"/>
<rect x="100" y="68" width="16" height="4.5" fill="#f4f4f4" stroke="#666" stroke-width="0.9"/>
<circle cx="116" cy="66.5" r="0.8" fill="#6c6"/>
<path d="M142,52.5 L152,67 M161,52.5 L151,67" stroke="#f4f4f4" stroke-width="2.2"/>
<circle cx="145" cy="71" r="3.6" fill="none" stroke="#efa0a0" stroke-width="2"/>
<circle cx="157.5" cy="71" r="3.6" fill="none" stroke="#efa0a0" stroke-width="2"/>
<rect x="173.5" y="51" width="13" height="15" fill="#f6f6f6" stroke="#e2e2e2" stroke-width="1"/>
<rect x="183" y="58" width="13" height="15.5" fill="#f8f8f8" stroke="#e0e0e0" stroke-width="1"/>
<path d="M186,62 h7 M186,65 h7 M186,68 h7" stroke="#dddddd" stroke-width="1"/>
<rect x="208.5" y="53.5" width="19.5" height="20" rx="1.5" fill="#efdcbc" stroke="#e4d0ae" stroke-width="1"/>
<rect x="213" y="50.5" width="10" height="5.5" rx="1" fill="#cfcfcf"/>
<rect x="217" y="62" width="13" height="12.5" fill="#fbfbfb" stroke="#e0e0e0" stroke-width="1"/>
<path d="M219,65.5 h9 M219,68.5 h9 M219,71.5 h6" stroke="#d8d8d8" stroke-width="1"/>
<path d="M257,57 L262,57 Q268,57 268,64 Q268,70 262.5,72" fill="none" stroke="#f2e79a" stroke-width="3.2"/>
<path d="M251.5,57.5 L258,52 L258,63 Z" fill="#f2e79a"/>
<path d="M301,57 L296,57 Q290,57 290,64 Q290,70 295.5,72" fill="none" stroke="#c4eea8" stroke-width="3.2"/>
<path d="M306.5,57.5 L300,52 L300,63 Z" fill="#c4eea8"/>
<rect x="328" y="51.5" width="22" height="22" fill="#f0f0f0" stroke="#555" stroke-width="1"/>
<line x1="343" y1="66" x2="349" y2="72" stroke="#9a9a9a" stroke-width="2.6"/>
<circle cx="339.5" cy="60.5" r="6.3" fill="url(#gLens)" stroke="#b8b8b8" stroke-width="1.3"/>
<rect x="361" y="51.5" width="22.5" height="22" fill="#f0f0f0" stroke="#555" stroke-width="1"/>
<line x1="367" y1="66" x2="362" y2="71" stroke="#b0b0b0" stroke-width="2.6"/>
<circle cx="372.5" cy="60.5" r="6.3" fill="url(#gLens)" stroke="#b8b8b8" stroke-width="1.3"/>
<line x1="370.5" y1="74" x2="385" y2="63" stroke="#d8a030" stroke-width="2.8"/>
<line x1="383" y1="64.5" x2="386" y2="62" stroke="#e03030" stroke-width="2.8"/>
<circle cx="414.5" cy="59.5" r="6" fill="none" stroke="#222" stroke-width="2.2"/>
<path d="M411,59.5 h7 M414.5,56 v7" stroke="#222" stroke-width="2.2"/>
<line x1="419" y1="64.5" x2="426.5" y2="71.5" stroke="#222" stroke-width="2.6"/>
<circle cx="448.5" cy="59.5" r="6" fill="none" stroke="#222" stroke-width="2.2"/>
<path d="M445,59.5 h7" stroke="#222" stroke-width="2.2"/>
<line x1="453" y1="64.5" x2="460.5" y2="71.5" stroke="#222" stroke-width="2.6"/>
<path d="M489,59 A7,7 0 1 0 484,71" fill="none" stroke="#111" stroke-width="2.2"/>
<path d="M485,59.5 L494,57 L491,66 Z" fill="#111"/>
<path d="M508,60 h-2 v12 h2 M515.5,60 h2 v12 h-2" fill="none" stroke="#222" stroke-width="1.5"/>
<circle cx="516" cy="58.5" r="5.5" fill="none" stroke="#222" stroke-width="2"/>
<line x1="520" y1="62.5" x2="528" y2="70.5" stroke="#222" stroke-width="2.2"/>
<path d="M551.5,57 V72.5 H556 M551.5,64 H556" fill="none" stroke="#444" stroke-width="1"/>
<rect x="549.5" y="51.5" width="23" height="5" rx="0.8" fill="#fafafa" stroke="#555" stroke-width="1"/>
<rect x="555.5" y="61.5" width="17" height="5" rx="0.8" fill="#fafafa" stroke="#555" stroke-width="1"/>
<rect x="555.5" y="70.5" width="17" height="5" rx="0.8" fill="#fafafa" stroke="#555" stroke-width="1"/>
<path d="M590.5,51.5 L603,51.5 L606,54.5 L606,70 L590.5,70 Z" fill="#e8e8e8" stroke="#c8c8c8" stroke-width="1"/>
<path d="M599,62 Q599,68 592,69" fill="none" stroke="#f0a030" stroke-width="2.6"/>
<path d="M586,69 L593,65 L593,73 Z" fill="#f0a030"/>
<path d="M625,53 L638,56 L651,53 L651,71 L638,73 L625,71 Z" fill="#f4f4f4" stroke="#555" stroke-width="1"/>
<path d="M638,56 V73" stroke="#777" stroke-width="1"/>
<path d="M627,73.5 L629,69 L643,58 L646,61.5 L632,72 Z" fill="#222"/>
<path d="M627,73.5 L629,69 L632,72 Z" fill="#e8d890"/>
<circle cx="645" cy="59.5" r="2.5" fill="#e090d0"/>
<path d="M659.5,53 L672,56 L685,53 L685,71 L672,73 L659.5,71 Z" fill="#f4f4f4" stroke="#555" stroke-width="1"/>
<path d="M672,56 V73" stroke="#777" stroke-width="1"/>
<line x1="673" y1="68" x2="680.5" y2="74" stroke="#999" stroke-width="2.6"/>
<circle cx="669" cy="64" r="5.8" fill="url(#gLens)" stroke="#bbb" stroke-width="1.2"/>
<path d="M706.5,56.5 L706.5,72.5 L721.5,64.5 Z" fill="#fff" stroke="#a01818" stroke-width="1.3"/>
<path d="M702,61.5 h4.5 M702,67.5 h4.5 M721.5,64.5 h4" stroke="#a01818" stroke-width="1.2"/>
<path d="M709,61 h3 M709,67 h3 M710.5,65.5 v3" stroke="#a01818" stroke-width="0.9"/>
<text x="711.5" y="59" font-family="Liberation Sans" font-size="8.5" fill="#111">U?A</text>
<text x="715.5" y="74.5" font-family="Liberation Sans" font-size="8.5" fill="#111">123</text>
<path d="M741,58 L738,54 M755,58 L758,54 M740,64 L736,63 M740,70 L737,73 M756,70 L759,73" stroke="#888" stroke-width="0.9"/>
<ellipse cx="748" cy="66" rx="7.5" ry="8.5" fill="url(#gBug)"/>
<ellipse cx="748" cy="57.5" rx="4.5" ry="2.5" fill="#222"/>
<circle cx="744.5" cy="63" r="1.3" fill="#111"/>
<circle cx="751.5" cy="63" r="1.3" fill="#111"/>
<circle cx="743.5" cy="69" r="1.3" fill="#111"/>
<circle cx="752.5" cy="69" r="1.3" fill="#111"/>
<circle cx="748" cy="72" r="1.3" fill="#111"/>
<path d="M745,60 L751.5,65 L761,55" fill="none" stroke="#1a9a1a" stroke-width="2.6"/>
<path d="M770.5,50.5 L790,50.5 L795.5,56 L795.5,75 L770.5,75 Z" fill="url(#gPage)" stroke="#aaa" stroke-width="1"/>
<path d="M775,55 L791,62 M778,63 L787,54" stroke="#c02020" stroke-width="1"/>
<path d="M778,63 L787,54" stroke="#20a020" stroke-width="1"/>
<rect x="770.5" y="65" width="25" height="10" fill="#2a7a2a"/>
<text x="783" y="74" font-family="Liberation Serif" font-weight="bold" font-size="10" fill="#fff" text-anchor="middle">NET</text>
<path d="M804.5,50.5 L824,50.5 L829.5,56 L829.5,75 L804.5,75 Z" fill="url(#gPage)" stroke="#aaa" stroke-width="1"/>
<rect x="804.5" y="64.5" width="25" height="10.5" fill="#26427a"/>
<text x="817" y="74" font-family="Liberation Serif" font-weight="bold" font-size="9.5" fill="#fff" text-anchor="middle">BOM</text>
<rect x="848" y="56" width="23.5" height="16" fill="#fafafa" stroke="#444" stroke-width="1"/>
<rect x="850" y="52.5" width="4" height="5" fill="#18c018" stroke="#0a6a0a" stroke-width="0.5"/>
<rect x="850" y="69" width="4" height="5" fill="#18c018" stroke="#0a6a0a" stroke-width="0.5"/>
<rect x="858" y="52.5" width="4" height="5" fill="#18c018" stroke="#0a6a0a" stroke-width="0.5"/>
<rect x="858" y="69" width="4" height="5" fill="#18c018" stroke="#0a6a0a" stroke-width="0.5"/>
<rect x="866" y="52.5" width="4" height="5" fill="#18c018" stroke="#0a6a0a" stroke-width="0.5"/>
<rect x="866" y="69" width="4" height="5" fill="#18c018" stroke="#0a6a0a" stroke-width="0.5"/>
<path d="M851,74.5 L853,69.5 L867,55 L870.5,58 L856.5,72.5 Z" fill="#1a1a1a"/>
<path d="M851,74.5 L853,69.5 L856.5,72.5 Z" fill="#e8d890"/>
<circle cx="869" cy="56" r="2.8" fill="#e090d0"/>
<rect x="882" y="50.5" width="16" height="15" fill="#f2f2f2" stroke="#ccc" stroke-width="0.8"/>
<path d="M885,53 L885,63 L895,58 Z" fill="none" stroke="#d02020" stroke-width="1"/>
<path d="M883,56 h2 M883,60 h2" stroke="#d02020" stroke-width="0.8"/>
<rect x="891.5" y="59" width="15.5" height="15.5" fill="#fafafa" stroke="#bbb" stroke-width="0.8"/>
<rect x="896.5" y="61" width="5" height="11" fill="#fff" stroke="#333" stroke-width="1"/>
<rect x="893" y="62" width="2" height="2" fill="#18b018"/><rect x="903" y="62" width="2" height="2" fill="#18b018"/>
<rect x="893" y="65" width="2" height="2" fill="#18b018"/><rect x="903" y="65" width="2" height="2" fill="#18b018"/>
<rect x="893" y="68" width="2" height="2" fill="#18b018"/><rect x="903" y="68" width="2" height="2" fill="#18b018"/>
<rect x="893" y="71" width="2" height="2" fill="#18b018"/><rect x="903" y="71" width="2" height="2" fill="#18b018"/>
<path d="M917,51 L936,51 L940,55 L940,74.5 L917,74.5 Z" fill="#ececec" stroke="#c4c4c4" stroke-width="0.8"/>
<path d="M921,55 V73 M925,53 V73 M929,57 H934 V66" fill="none" stroke="#b8b8b8" stroke-width="1.2"/>
<path d="M929,74 L930.5,70 L939,60 L941.5,62.5 L933,72 Z" fill="#222"/>
<path d="M929,74 L930.5,70 L933,72 Z" fill="#e8d890"/>
<circle cx="940.5" cy="61" r="2" fill="#e090d0"/>
<path d="M952,51 L970,51 L974.5,55.5 L974.5,68 L952,68 Z" fill="#fafafa" stroke="#bbb" stroke-width="0.8"/>
<path d="M950,59.5 L957,53.5 L957,57 L967,57 L967,62 L957,62 L957,65.5 Z" fill="#fff" stroke="#999" stroke-width="1"/>
<text x="949.5" y="75.5" font-family="Liberation Sans" font-weight="bold" font-size="9.6" fill="#555" textLength="25" lengthAdjust="spacingAndGlyphs">BACK</text>
<circle cx="10" cy="95" r="1.2" fill="#222"/>
<circle cx="10" cy="101" r="1.2" fill="#222"/>
<circle cx="10" cy="107" r="1.2" fill="#222"/>
<circle cx="10" cy="113" r="1.2" fill="#222"/>
<circle cx="16" cy="95" r="1.2" fill="#222"/>
<circle cx="16" cy="101" r="1.2" fill="#222"/>
<circle cx="16" cy="107" r="1.2" fill="#222"/>
<circle cx="16" cy="113" r="1.2" fill="#222"/>
<circle cx="22" cy="95" r="1.2" fill="#222"/>
<circle cx="22" cy="101" r="1.2" fill="#222"/>
<circle cx="22" cy="107" r="1.2" fill="#222"/>
<circle cx="22" cy="113" r="1.2" fill="#222"/>
<circle cx="28" cy="95" r="1.2" fill="#222"/>
<circle cx="28" cy="101" r="1.2" fill="#222"/>
<circle cx="28" cy="107" r="1.2" fill="#222"/>
<circle cx="28" cy="113" r="1.2" fill="#222"/>
<rect x="3.5" y="122.5" width="31" height="31" fill="#c6e4f7" stroke="#3da4e8" stroke-width="1"/>
<text x="12.5" y="139" font-family="Liberation Sans" font-weight="bold" font-size="14" fill="#222">In</text>
<path d="M9,144.5 H29" stroke="#222" stroke-width="1.3"/><path d="M7,144.5 L11.5,141.5 L11.5,147.5 Z M31,144.5 L26.5,141.5 L26.5,147.5 Z" fill="#222"/>
<text x="6.5" y="172" font-family="Liberation Sans" font-weight="bold" font-size="13" fill="#222" textLength="25" lengthAdjust="spacingAndGlyphs">mm</text>
<path d="M9,179 H29" stroke="#222" stroke-width="1.3"/><path d="M7,179 L11.5,176 L11.5,182 Z M31,179 L26.5,176 L26.5,182 Z" fill="#222"/>
<rect x="3.5" y="190.5" width="31" height="31" fill="#c6e4f7" stroke="#3da4e8" stroke-width="1"/>
<path d="M15,194 V218 M7,202 H31" stroke="#888" stroke-width="1.6"/>
<path d="M15,198 V206 M10,202 H20" stroke="#222" stroke-width="1.8"/>
<path d="M18.5,205 L18.5,217 L21,214.5 L23.5,219 L25.5,218 L23,213.5 L26.5,213.5 Z" fill="#fff" stroke="#333" stroke-width="0.9"/>
<path d="M21.5,230 V251" stroke="#999" stroke-width="1.5"/>
<circle cx="21.5" cy="229.5" r="1.8" fill="#eee" stroke="#999" stroke-width="1"/><circle cx="21.5" cy="250.5" r="1.8" fill="#eee" stroke="#999" stroke-width="1"/>
<path d="M10.5,229.5 L10.5,251 L27,240 Z" fill="#fff" fill-opacity="0.8" stroke="#8a1010" stroke-width="1.8"/>
<path d="M6,235.5 H10.5 M6,243.5 H10.5 M27,240 H31" stroke="#8a1010" stroke-width="1.6"/>
<path d="M13,237 h4 M13,242.5 h4 M15,240.5 v4" stroke="#8a1010" stroke-width="1"/>
<rect x="3.5" y="258.5" width="31" height="31" fill="#c6e4f7" stroke="#3da4e8" stroke-width="1"/>
<path d="M13.5,262 V286 M7,280.5 H30 M13.5,272.5 H20.5 V280.5" fill="none" stroke="#222" stroke-width="1.4"/>
<rect x="1281.5" y="88.5" width="31" height="31" fill="#c6e4f7" stroke="#3da4e8" stroke-width="1"/>
<path d="M1290.5,95 L1290.5,112 L1294.5,108 L1298,115 L1301,113.5 L1297.5,106.5 L1303,106.5 Z" fill="#fafafa" stroke="#444" stroke-width="1"/>
<rect x="1285.5" y="126.5" width="23" height="4.8" fill="#fafafa" stroke="#555" stroke-width="1"/>
<rect x="1291.5" y="136" width="17" height="4.8" fill="#fafafa" stroke="#555" stroke-width="1"/>
<rect x="1291.5" y="145.5" width="17" height="4.8" fill="#fafafa" stroke="#555" stroke-width="1"/>
<path d="M1287.5,131.5 V148 H1291.5 M1287.5,138.5 H1291.5" fill="none" stroke="#444" stroke-width="1"/>
<path d="M1291,130 L1291,145 L1294.5,141.5 L1297.5,147.5 L1300,146 L1297,140 L1302,140 Z" fill="#f4f4f4" stroke="#555" stroke-width="0.9"/>
<path d="M1288.5,161 L1288.5,183 L1306,172 Z" fill="#fff" stroke="#8a1010" stroke-width="1.8"/>
<path d="M1284,167 H1288.5 M1284,177 H1288.5 M1306,172 H1310" stroke="#8a1010" stroke-width="1.6"/>
<path d="M1291,168.5 h4 M1291,175 h4 M1293,173 v4" stroke="#8a1010" stroke-width="1"/>
<path d="M1297,196 V207 M1288,207 H1306 M1291,211 H1303 M1295,215 H1299" stroke="#8a1010" stroke-width="2"/>
<line x1="1286" y1="251" x2="1308" y2="228.5" stroke="#129a12" stroke-width="2" stroke-linecap="round"/>
<line x1="1286" y1="284" x2="1308" y2="264" stroke="#0000d8" stroke-width="3.6" stroke-linecap="round"/>
<path d="M1307,295 V321 M1285,298.5 H1296 M1285,306.5 H1296" stroke="#999" stroke-width="2.4"/>
<path d="M1296,298.5 L1307,305.5 M1296,306.5 L1307,313.5" stroke="#129a12" stroke-width="2" stroke-linecap="round"/>
<path d="M1307,329 V355 M1285,332.5 H1296 M1285,341.5 H1296" stroke="#999" stroke-width="2.4"/>
<path d="M1296,332.5 L1307,340 M1296,341.5 L1307,349" stroke="#0000d8" stroke-width="3.4" stroke-linecap="round"/>
<path d="M1290,369 L1304.5,383.5 M1304.5,369 L1290,383.5" stroke="#0000d0" stroke-width="2"/>
<path d="M1285,410 H1300 M1300.5,398 V422" stroke="#999" stroke-width="2"/>
<circle cx="1300.5" cy="410" r="4.6" fill="#129a12"/>
<text x="1290.5" y="447.5" font-family="Liberation Sans" font-size="16" fill="#111">A</text>
<line x1="1286.5" y1="452.5" x2="1308" y2="452.5" stroke="#129a12" stroke-width="2.4" stroke-linecap="round"/>
<path d="M1285.5,470.5 L1298,470.5 L1304.5,478.5 L1298,486.5 L1285.5,486.5 Z" fill="#fff" stroke="#8a1010" stroke-width="1.5"/>
<text x="1288" y="484.5" font-family="Liberation Sans" font-size="13" fill="#111">A</text>
<path d="M1304.5,478.5 H1309.5" stroke="#129a12" stroke-width="1.5"/>
<path d="M1284.5,499.5 L1309.5,499.5 L1309.5,517.5 L1303.5,523.5 L1284.5,523.5 Z" fill="url(#gPage)" stroke="#aaa" stroke-width="0.8"/>
<path d="M1309.5,517.5 Q1304.5,517.5 1303.5,523.5" fill="#fff" stroke="#999" stroke-width="0.8"/>
<text x="1285.5" y="518" font-family="Liberation Sans" font-size="13" fill="#111">A</text>
<path d="M1296,505 H1301 L1305.5,511.5 L1301,518 H1296 Z" fill="none" stroke="#c89a10" stroke-width="1.6"/>
<path d="M1305.5,511.5 H1309" stroke="#18a018" stroke-width="1.5"/>
<path d="M1284.5,533.5 L1304.5,533.5 L1304.5,547.5 L1298.5,553.5 L1284.5,553.5 Z" fill="url(#gPage)" stroke="#aaa" stroke-width="0.8"/>
<path d="M1304.5,547.5 Q1299.5,547.5 1298.5,553.5" fill="#fff" stroke="#999" stroke-width="0.8"/>
<path d="M1287.5,536 L1307.5,536 L1307.5,551 L1301.5,557 L1287.5,557 Z" fill="url(#gPage)" stroke="#aaa" stroke-width="0.8"/>
<path d="M1307.5,551 Q1302.5,551 1301.5,557" fill="#fff" stroke="#999" stroke-width="0.8"/>
<path d="M1290,538 L1310,538 L1310,553 L1304,559 L1290,559 Z" fill="url(#gPage)" stroke="#aaa" stroke-width="0.8"/>
<path d="M1310,553 Q1305,553 1304,559" fill="#fff" stroke="#999" stroke-width="0.8"/>
<path d="M1290.5,537 V548" stroke="#c04040" stroke-width="0.9" stroke-dasharray="1.5,1"/>
<rect x="1295.5" y="543" width="2.5" height="2" fill="#5a8ab0"/><rect x="1303" y="550.5" width="2.5" height="2" fill="#5a8ab0"/>
<path d="M1300,542.5 v4 M1300.5,549 L1298.5,551 L1300.5,553.5" stroke="#40b030" stroke-width="1.3" fill="none"/>
<path d="M1300,541 H1306 M1300,547 H1305 M1294,550.5 H1298" stroke="#5070c0" stroke-width="0.7"/>
<circle cx="1306" cy="541" r="0.7" fill="#d04040"/><circle cx="1305" cy="547" r="0.7" fill="#d04040"/>
<path d="M1284.5,567.5 L1304.5,567.5 L1304.5,581.5 L1298.5,587.5 L1284.5,587.5 Z" fill="url(#gPage)" stroke="#aaa" stroke-width="0.8"/>
<path d="M1304.5,581.5 Q1299.5,581.5 1298.5,587.5" fill="#fff" stroke="#999" stroke-width="0.8"/>
<path d="M1287.5,569.5 L1307.5,569.5 L1307.5,584.5 L1301.5,590.5 L1287.5,590.5 Z" fill="url(#gPage)" stroke="#aaa" stroke-width="0.8"/>
<path d="M1307.5,584.5 Q1302.5,584.5 1301.5,590.5" fill="#fff" stroke="#999" stroke-width="0.8"/>
<path d="M1290,571.5 L1310,571.5 L1310,586.5 L1304,592.5 L1290,592.5 Z" fill="url(#gPage)" stroke="#aaa" stroke-width="0.8"/>
<path d="M1310,586.5 Q1305,586.5 1304,592.5" fill="#fff" stroke="#999" stroke-width="0.8"/>
<text x="1291.5" y="581" font-family="Liberation Sans" font-size="9.5" fill="#111">A</text>
<path d="M1299.5,572.5 H1302.5 L1306,576.5 L1302.5,580.5 H1299.5 Z" fill="none" stroke="#c89a10" stroke-width="1.3"/>
<path d="M1306,576.5 H1309.5" stroke="#18a018" stroke-width="1.2"/>
<path d="M1284,583.5 H1291 V579.5 L1299.5,586 L1291,592.5 V588.5 H1284 Z" fill="#3a9a1a"/>
<path d="M1284.5,601.5 L1309.5,601.5 L1309.5,619.5 L1303.5,625.5 L1284.5,625.5 Z" fill="url(#gPage)" stroke="#aaa" stroke-width="0.8"/>
<path d="M1309.5,619.5 Q1304.5,619.5 1303.5,625.5" fill="#fff" stroke="#999" stroke-width="0.8"/>
<path d="M1285.5,607.5 H1290 L1294.5,614 L1290,620.5 H1285.5 Z" fill="none" stroke="#c89a10" stroke-width="1.6"/>
<text x="1296" y="619.5" font-family="Liberation Sans" font-size="13" fill="#111">A</text>
<line x1="1286" y1="659" x2="1308.5" y2="636.5" stroke="#0000e0" stroke-width="2.8" stroke-dasharray="4,3"/></svg>
<div id="status" class="abs"></div>
<div class="abs" style="left:0;top:692px;width:1316px;height:1px;background:#aaa6a4"></div>
<div id="statbox" class="abs"></div>
<div class="ct" style="left:4.47px;top:726.4px;font-size:13.8px;transform:scaleX(1.0275)">C126 component found</div>
<div class="ct" style="left:488.8px;top:726.4px;font-size:13.8px;transform:scaleX(1.0256)">Z 2.75</div>
<div class="ct" style="left:557.18px;top:726.4px;font-size:13.8px;transform:scaleX(1.0239)">X 8.450</div>
<div class="ct" style="left:613.28px;top:726.4px;font-size:13.8px;transform:scaleX(1.0152)">Y 6.100</div>
<div class="ct" style="left:766.28px;top:726.4px;font-size:13.8px;transform:scaleX(1.0173)">dx 8.450</div>
<div class="ct" style="left:827.77px;top:726.4px;font-size:13.8px;transform:scaleX(1.0327)">dy 6.100</div>
<div class="ct" style="left:890.53px;top:726.4px;font-size:13.8px;transform:scaleX(1.0697)">dist 10.422</div>
<div class="ct" style="left:1092.68px;top:726.4px;font-size:13.8px;transform:scaleX(1.0205)">Inches</div>
<div class="ct" style="left:9.93px;top:25.1px;font-size:12.6px;transform:scaleX(0.9684)"><u style="text-decoration:underline;text-underline-offset:1.5px">F</u>ile</div>
<div class="ct" style="left:43.21px;top:25.1px;font-size:12.6px;transform:scaleX(1.0857)"><u style="text-decoration:underline;text-underline-offset:1.5px">E</u>dit</div>
<div class="ct" style="left:82.1px;top:25.1px;font-size:12.6px;transform:scaleX(1.0333)"><u style="text-decoration:underline;text-underline-offset:1.5px">V</u>iew</div>
<div class="ct" style="left:123.21px;top:25.1px;font-size:12.6px;transform:scaleX(1.0933)"><u style="text-decoration:underline;text-underline-offset:1.5px">P</u>lace</div>
<div class="ct" style="left:170.96px;top:25.1px;font-size:12.6px;transform:scaleX(1.1364)">P<u style="text-decoration:underline;text-underline-offset:1.5px">r</u>eferences</div>
<div class="ct" style="left:262.1px;top:25.1px;font-size:12.6px;transform:scaleX(1.0345)"><u style="text-decoration:underline;text-underline-offset:1.5px">T</u>ools</div>
<div class="ct" style="left:306.01px;top:25.1px;font-size:12.6px;transform:scaleX(1.088)"><u style="text-decoration:underline;text-underline-offset:1.5px">H</u>elp</div>
<div class="ct" style="left:396.57px;top:3.4000000000000004px;font-size:12.6px;transform:scaleX(1.0268)">[ baseband /baseband/] (/home/marcos/life/Downloads/hackrf-master/hardware/hackrf-one)</div>
</body></html>
